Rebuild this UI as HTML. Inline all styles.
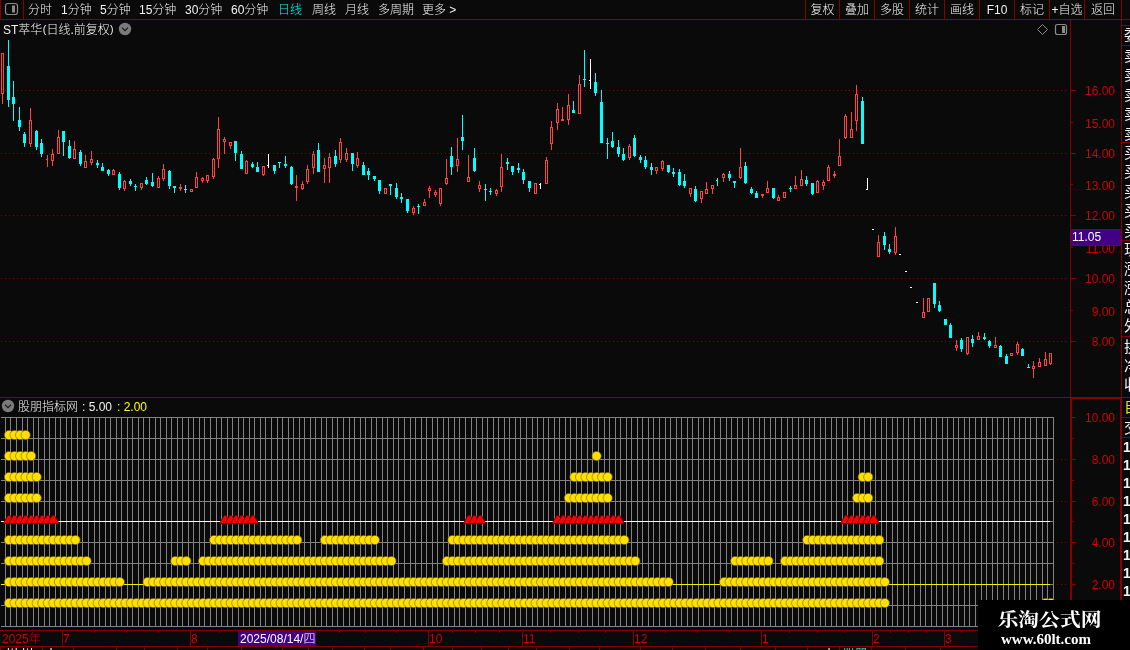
<!DOCTYPE html><html><head><meta charset="utf-8"><title>chart</title><style>
html,body{margin:0;padding:0;background:#0a0a0a;}
body{will-change:transform;width:1130px;height:650px;position:relative;overflow:hidden;font-family:"Liberation Sans","Noto Sans CJK SC",sans-serif;}
.t{position:absolute;white-space:nowrap;font-size:12px;line-height:16px;color:#f2f2f2;font-weight:300;}
.cy{color:#00ffff;}
.pa{font-size:10.5px;position:relative;top:-1.2px;padding:0 0.3px;}
.rd{color:#d20000;line-height:14px;}
.ax{color:#d20000;width:43px;text-align:right;}
.pbox{position:absolute;left:1071px;top:229px;width:50px;height:17px;background:#420086;box-sizing:border-box;border-top:1px solid #870000;border-bottom:1px solid #870000;}
.pbox span{position:absolute;left:1px;top:0px;font-size:12px;line-height:15px;color:#fff;}
.dbox{position:absolute;left:238px;top:631px;width:78px;height:15px;background:#420086;color:#fff;font-size:12px;line-height:17px;font-weight:300;text-indent:2px;white-space:nowrap;overflow:hidden;}
.strip{position:absolute;left:1122px;top:0;width:8px;height:650px;overflow:hidden;}
.s{position:absolute;left:2px;font-size:15px;line-height:18px;color:#f2f2f2;white-space:nowrap;}
.wm{position:absolute;left:978px;top:600px;width:152px;height:50px;background:#000;color:#fff;font-family:"Liberation Serif","Noto Serif CJK SC",serif;font-weight:bold;}
.w1{position:absolute;left:19.5px;top:8px;font-size:20.8px;line-height:26px;white-space:nowrap;transform:scaleY(0.9);transform-origin:0 0;}
.w2{position:absolute;left:23px;top:30px;font-size:15px;line-height:18px;white-space:nowrap;}
.bt{position:absolute;top:648px;height:2px;overflow:hidden;font-size:12px;line-height:12px;white-space:nowrap;}
.bt span{position:relative;top:0px;display:block;}
</style></head><body><svg width="1130" height="650" viewBox="0 0 1130 650" style="position:absolute;left:0;top:0"><g shape-rendering="crispEdges"><path d="M1 90h1v1h-1zM5 90h1v1h-1zM9 90h1v1h-1zM13 90h1v1h-1zM17 90h1v1h-1zM21 90h1v1h-1zM25 90h1v1h-1zM29 90h1v1h-1zM33 90h1v1h-1zM37 90h1v1h-1zM41 90h1v1h-1zM45 90h1v1h-1zM49 90h1v1h-1zM53 90h1v1h-1zM57 90h1v1h-1zM61 90h1v1h-1zM65 90h1v1h-1zM69 90h1v1h-1zM73 90h1v1h-1zM77 90h1v1h-1zM81 90h1v1h-1zM85 90h1v1h-1zM89 90h1v1h-1zM93 90h1v1h-1zM97 90h1v1h-1zM101 90h1v1h-1zM105 90h1v1h-1zM109 90h1v1h-1zM113 90h1v1h-1zM117 90h1v1h-1zM121 90h1v1h-1zM125 90h1v1h-1zM129 90h1v1h-1zM133 90h1v1h-1zM137 90h1v1h-1zM141 90h1v1h-1zM145 90h1v1h-1zM149 90h1v1h-1zM153 90h1v1h-1zM157 90h1v1h-1zM161 90h1v1h-1zM165 90h1v1h-1zM169 90h1v1h-1zM173 90h1v1h-1zM177 90h1v1h-1zM181 90h1v1h-1zM185 90h1v1h-1zM189 90h1v1h-1zM193 90h1v1h-1zM197 90h1v1h-1zM201 90h1v1h-1zM205 90h1v1h-1zM209 90h1v1h-1zM213 90h1v1h-1zM217 90h1v1h-1zM221 90h1v1h-1zM225 90h1v1h-1zM229 90h1v1h-1zM233 90h1v1h-1zM237 90h1v1h-1zM241 90h1v1h-1zM245 90h1v1h-1zM249 90h1v1h-1zM253 90h1v1h-1zM257 90h1v1h-1zM261 90h1v1h-1zM265 90h1v1h-1zM269 90h1v1h-1zM273 90h1v1h-1zM277 90h1v1h-1zM281 90h1v1h-1zM285 90h1v1h-1zM289 90h1v1h-1zM293 90h1v1h-1zM297 90h1v1h-1zM301 90h1v1h-1zM305 90h1v1h-1zM309 90h1v1h-1zM313 90h1v1h-1zM317 90h1v1h-1zM321 90h1v1h-1zM325 90h1v1h-1zM329 90h1v1h-1zM333 90h1v1h-1zM337 90h1v1h-1zM341 90h1v1h-1zM345 90h1v1h-1zM349 90h1v1h-1zM353 90h1v1h-1zM357 90h1v1h-1zM361 90h1v1h-1zM365 90h1v1h-1zM369 90h1v1h-1zM373 90h1v1h-1zM377 90h1v1h-1zM381 90h1v1h-1zM385 90h1v1h-1zM389 90h1v1h-1zM393 90h1v1h-1zM397 90h1v1h-1zM401 90h1v1h-1zM405 90h1v1h-1zM409 90h1v1h-1zM413 90h1v1h-1zM417 90h1v1h-1zM421 90h1v1h-1zM425 90h1v1h-1zM429 90h1v1h-1zM433 90h1v1h-1zM437 90h1v1h-1zM441 90h1v1h-1zM445 90h1v1h-1zM449 90h1v1h-1zM453 90h1v1h-1zM457 90h1v1h-1zM461 90h1v1h-1zM465 90h1v1h-1zM469 90h1v1h-1zM473 90h1v1h-1zM477 90h1v1h-1zM481 90h1v1h-1zM485 90h1v1h-1zM489 90h1v1h-1zM493 90h1v1h-1zM497 90h1v1h-1zM501 90h1v1h-1zM505 90h1v1h-1zM509 90h1v1h-1zM513 90h1v1h-1zM517 90h1v1h-1zM521 90h1v1h-1zM525 90h1v1h-1zM529 90h1v1h-1zM533 90h1v1h-1zM537 90h1v1h-1zM541 90h1v1h-1zM545 90h1v1h-1zM549 90h1v1h-1zM553 90h1v1h-1zM557 90h1v1h-1zM561 90h1v1h-1zM565 90h1v1h-1zM569 90h1v1h-1zM573 90h1v1h-1zM577 90h1v1h-1zM581 90h1v1h-1zM585 90h1v1h-1zM589 90h1v1h-1zM593 90h1v1h-1zM597 90h1v1h-1zM601 90h1v1h-1zM605 90h1v1h-1zM609 90h1v1h-1zM613 90h1v1h-1zM617 90h1v1h-1zM621 90h1v1h-1zM625 90h1v1h-1zM629 90h1v1h-1zM633 90h1v1h-1zM637 90h1v1h-1zM641 90h1v1h-1zM645 90h1v1h-1zM649 90h1v1h-1zM653 90h1v1h-1zM657 90h1v1h-1zM661 90h1v1h-1zM665 90h1v1h-1zM669 90h1v1h-1zM673 90h1v1h-1zM677 90h1v1h-1zM681 90h1v1h-1zM685 90h1v1h-1zM689 90h1v1h-1zM693 90h1v1h-1zM697 90h1v1h-1zM701 90h1v1h-1zM705 90h1v1h-1zM709 90h1v1h-1zM713 90h1v1h-1zM717 90h1v1h-1zM721 90h1v1h-1zM725 90h1v1h-1zM729 90h1v1h-1zM733 90h1v1h-1zM737 90h1v1h-1zM741 90h1v1h-1zM745 90h1v1h-1zM749 90h1v1h-1zM753 90h1v1h-1zM757 90h1v1h-1zM761 90h1v1h-1zM765 90h1v1h-1zM769 90h1v1h-1zM773 90h1v1h-1zM777 90h1v1h-1zM781 90h1v1h-1zM785 90h1v1h-1zM789 90h1v1h-1zM793 90h1v1h-1zM797 90h1v1h-1zM801 90h1v1h-1zM805 90h1v1h-1zM809 90h1v1h-1zM813 90h1v1h-1zM817 90h1v1h-1zM821 90h1v1h-1zM825 90h1v1h-1zM829 90h1v1h-1zM833 90h1v1h-1zM837 90h1v1h-1zM841 90h1v1h-1zM845 90h1v1h-1zM849 90h1v1h-1zM853 90h1v1h-1zM857 90h1v1h-1zM861 90h1v1h-1zM865 90h1v1h-1zM869 90h1v1h-1zM873 90h1v1h-1zM877 90h1v1h-1zM881 90h1v1h-1zM885 90h1v1h-1zM889 90h1v1h-1zM893 90h1v1h-1zM897 90h1v1h-1zM901 90h1v1h-1zM905 90h1v1h-1zM909 90h1v1h-1zM913 90h1v1h-1zM917 90h1v1h-1zM921 90h1v1h-1zM925 90h1v1h-1zM929 90h1v1h-1zM933 90h1v1h-1zM937 90h1v1h-1zM941 90h1v1h-1zM945 90h1v1h-1zM949 90h1v1h-1zM953 90h1v1h-1zM957 90h1v1h-1zM961 90h1v1h-1zM965 90h1v1h-1zM969 90h1v1h-1zM973 90h1v1h-1zM977 90h1v1h-1zM981 90h1v1h-1zM985 90h1v1h-1zM989 90h1v1h-1zM993 90h1v1h-1zM997 90h1v1h-1zM1001 90h1v1h-1zM1005 90h1v1h-1zM1009 90h1v1h-1zM1013 90h1v1h-1zM1017 90h1v1h-1zM1021 90h1v1h-1zM1025 90h1v1h-1zM1029 90h1v1h-1zM1033 90h1v1h-1zM1037 90h1v1h-1zM1041 90h1v1h-1zM1045 90h1v1h-1zM1049 90h1v1h-1zM1053 90h1v1h-1zM1057 90h1v1h-1zM1061 90h1v1h-1zM1065 90h1v1h-1zM1 153h1v1h-1zM5 153h1v1h-1zM9 153h1v1h-1zM13 153h1v1h-1zM17 153h1v1h-1zM21 153h1v1h-1zM25 153h1v1h-1zM29 153h1v1h-1zM33 153h1v1h-1zM37 153h1v1h-1zM41 153h1v1h-1zM45 153h1v1h-1zM49 153h1v1h-1zM53 153h1v1h-1zM57 153h1v1h-1zM61 153h1v1h-1zM65 153h1v1h-1zM69 153h1v1h-1zM73 153h1v1h-1zM77 153h1v1h-1zM81 153h1v1h-1zM85 153h1v1h-1zM89 153h1v1h-1zM93 153h1v1h-1zM97 153h1v1h-1zM101 153h1v1h-1zM105 153h1v1h-1zM109 153h1v1h-1zM113 153h1v1h-1zM117 153h1v1h-1zM121 153h1v1h-1zM125 153h1v1h-1zM129 153h1v1h-1zM133 153h1v1h-1zM137 153h1v1h-1zM141 153h1v1h-1zM145 153h1v1h-1zM149 153h1v1h-1zM153 153h1v1h-1zM157 153h1v1h-1zM161 153h1v1h-1zM165 153h1v1h-1zM169 153h1v1h-1zM173 153h1v1h-1zM177 153h1v1h-1zM181 153h1v1h-1zM185 153h1v1h-1zM189 153h1v1h-1zM193 153h1v1h-1zM197 153h1v1h-1zM201 153h1v1h-1zM205 153h1v1h-1zM209 153h1v1h-1zM213 153h1v1h-1zM217 153h1v1h-1zM221 153h1v1h-1zM225 153h1v1h-1zM229 153h1v1h-1zM233 153h1v1h-1zM237 153h1v1h-1zM241 153h1v1h-1zM245 153h1v1h-1zM249 153h1v1h-1zM253 153h1v1h-1zM257 153h1v1h-1zM261 153h1v1h-1zM265 153h1v1h-1zM269 153h1v1h-1zM273 153h1v1h-1zM277 153h1v1h-1zM281 153h1v1h-1zM285 153h1v1h-1zM289 153h1v1h-1zM293 153h1v1h-1zM297 153h1v1h-1zM301 153h1v1h-1zM305 153h1v1h-1zM309 153h1v1h-1zM313 153h1v1h-1zM317 153h1v1h-1zM321 153h1v1h-1zM325 153h1v1h-1zM329 153h1v1h-1zM333 153h1v1h-1zM337 153h1v1h-1zM341 153h1v1h-1zM345 153h1v1h-1zM349 153h1v1h-1zM353 153h1v1h-1zM357 153h1v1h-1zM361 153h1v1h-1zM365 153h1v1h-1zM369 153h1v1h-1zM373 153h1v1h-1zM377 153h1v1h-1zM381 153h1v1h-1zM385 153h1v1h-1zM389 153h1v1h-1zM393 153h1v1h-1zM397 153h1v1h-1zM401 153h1v1h-1zM405 153h1v1h-1zM409 153h1v1h-1zM413 153h1v1h-1zM417 153h1v1h-1zM421 153h1v1h-1zM425 153h1v1h-1zM429 153h1v1h-1zM433 153h1v1h-1zM437 153h1v1h-1zM441 153h1v1h-1zM445 153h1v1h-1zM449 153h1v1h-1zM453 153h1v1h-1zM457 153h1v1h-1zM461 153h1v1h-1zM465 153h1v1h-1zM469 153h1v1h-1zM473 153h1v1h-1zM477 153h1v1h-1zM481 153h1v1h-1zM485 153h1v1h-1zM489 153h1v1h-1zM493 153h1v1h-1zM497 153h1v1h-1zM501 153h1v1h-1zM505 153h1v1h-1zM509 153h1v1h-1zM513 153h1v1h-1zM517 153h1v1h-1zM521 153h1v1h-1zM525 153h1v1h-1zM529 153h1v1h-1zM533 153h1v1h-1zM537 153h1v1h-1zM541 153h1v1h-1zM545 153h1v1h-1zM549 153h1v1h-1zM553 153h1v1h-1zM557 153h1v1h-1zM561 153h1v1h-1zM565 153h1v1h-1zM569 153h1v1h-1zM573 153h1v1h-1zM577 153h1v1h-1zM581 153h1v1h-1zM585 153h1v1h-1zM589 153h1v1h-1zM593 153h1v1h-1zM597 153h1v1h-1zM601 153h1v1h-1zM605 153h1v1h-1zM609 153h1v1h-1zM613 153h1v1h-1zM617 153h1v1h-1zM621 153h1v1h-1zM625 153h1v1h-1zM629 153h1v1h-1zM633 153h1v1h-1zM637 153h1v1h-1zM641 153h1v1h-1zM645 153h1v1h-1zM649 153h1v1h-1zM653 153h1v1h-1zM657 153h1v1h-1zM661 153h1v1h-1zM665 153h1v1h-1zM669 153h1v1h-1zM673 153h1v1h-1zM677 153h1v1h-1zM681 153h1v1h-1zM685 153h1v1h-1zM689 153h1v1h-1zM693 153h1v1h-1zM697 153h1v1h-1zM701 153h1v1h-1zM705 153h1v1h-1zM709 153h1v1h-1zM713 153h1v1h-1zM717 153h1v1h-1zM721 153h1v1h-1zM725 153h1v1h-1zM729 153h1v1h-1zM733 153h1v1h-1zM737 153h1v1h-1zM741 153h1v1h-1zM745 153h1v1h-1zM749 153h1v1h-1zM753 153h1v1h-1zM757 153h1v1h-1zM761 153h1v1h-1zM765 153h1v1h-1zM769 153h1v1h-1zM773 153h1v1h-1zM777 153h1v1h-1zM781 153h1v1h-1zM785 153h1v1h-1zM789 153h1v1h-1zM793 153h1v1h-1zM797 153h1v1h-1zM801 153h1v1h-1zM805 153h1v1h-1zM809 153h1v1h-1zM813 153h1v1h-1zM817 153h1v1h-1zM821 153h1v1h-1zM825 153h1v1h-1zM829 153h1v1h-1zM833 153h1v1h-1zM837 153h1v1h-1zM841 153h1v1h-1zM845 153h1v1h-1zM849 153h1v1h-1zM853 153h1v1h-1zM857 153h1v1h-1zM861 153h1v1h-1zM865 153h1v1h-1zM869 153h1v1h-1zM873 153h1v1h-1zM877 153h1v1h-1zM881 153h1v1h-1zM885 153h1v1h-1zM889 153h1v1h-1zM893 153h1v1h-1zM897 153h1v1h-1zM901 153h1v1h-1zM905 153h1v1h-1zM909 153h1v1h-1zM913 153h1v1h-1zM917 153h1v1h-1zM921 153h1v1h-1zM925 153h1v1h-1zM929 153h1v1h-1zM933 153h1v1h-1zM937 153h1v1h-1zM941 153h1v1h-1zM945 153h1v1h-1zM949 153h1v1h-1zM953 153h1v1h-1zM957 153h1v1h-1zM961 153h1v1h-1zM965 153h1v1h-1zM969 153h1v1h-1zM973 153h1v1h-1zM977 153h1v1h-1zM981 153h1v1h-1zM985 153h1v1h-1zM989 153h1v1h-1zM993 153h1v1h-1zM997 153h1v1h-1zM1001 153h1v1h-1zM1005 153h1v1h-1zM1009 153h1v1h-1zM1013 153h1v1h-1zM1017 153h1v1h-1zM1021 153h1v1h-1zM1025 153h1v1h-1zM1029 153h1v1h-1zM1033 153h1v1h-1zM1037 153h1v1h-1zM1041 153h1v1h-1zM1045 153h1v1h-1zM1049 153h1v1h-1zM1053 153h1v1h-1zM1057 153h1v1h-1zM1061 153h1v1h-1zM1065 153h1v1h-1zM1 215h1v1h-1zM5 215h1v1h-1zM9 215h1v1h-1zM13 215h1v1h-1zM17 215h1v1h-1zM21 215h1v1h-1zM25 215h1v1h-1zM29 215h1v1h-1zM33 215h1v1h-1zM37 215h1v1h-1zM41 215h1v1h-1zM45 215h1v1h-1zM49 215h1v1h-1zM53 215h1v1h-1zM57 215h1v1h-1zM61 215h1v1h-1zM65 215h1v1h-1zM69 215h1v1h-1zM73 215h1v1h-1zM77 215h1v1h-1zM81 215h1v1h-1zM85 215h1v1h-1zM89 215h1v1h-1zM93 215h1v1h-1zM97 215h1v1h-1zM101 215h1v1h-1zM105 215h1v1h-1zM109 215h1v1h-1zM113 215h1v1h-1zM117 215h1v1h-1zM121 215h1v1h-1zM125 215h1v1h-1zM129 215h1v1h-1zM133 215h1v1h-1zM137 215h1v1h-1zM141 215h1v1h-1zM145 215h1v1h-1zM149 215h1v1h-1zM153 215h1v1h-1zM157 215h1v1h-1zM161 215h1v1h-1zM165 215h1v1h-1zM169 215h1v1h-1zM173 215h1v1h-1zM177 215h1v1h-1zM181 215h1v1h-1zM185 215h1v1h-1zM189 215h1v1h-1zM193 215h1v1h-1zM197 215h1v1h-1zM201 215h1v1h-1zM205 215h1v1h-1zM209 215h1v1h-1zM213 215h1v1h-1zM217 215h1v1h-1zM221 215h1v1h-1zM225 215h1v1h-1zM229 215h1v1h-1zM233 215h1v1h-1zM237 215h1v1h-1zM241 215h1v1h-1zM245 215h1v1h-1zM249 215h1v1h-1zM253 215h1v1h-1zM257 215h1v1h-1zM261 215h1v1h-1zM265 215h1v1h-1zM269 215h1v1h-1zM273 215h1v1h-1zM277 215h1v1h-1zM281 215h1v1h-1zM285 215h1v1h-1zM289 215h1v1h-1zM293 215h1v1h-1zM297 215h1v1h-1zM301 215h1v1h-1zM305 215h1v1h-1zM309 215h1v1h-1zM313 215h1v1h-1zM317 215h1v1h-1zM321 215h1v1h-1zM325 215h1v1h-1zM329 215h1v1h-1zM333 215h1v1h-1zM337 215h1v1h-1zM341 215h1v1h-1zM345 215h1v1h-1zM349 215h1v1h-1zM353 215h1v1h-1zM357 215h1v1h-1zM361 215h1v1h-1zM365 215h1v1h-1zM369 215h1v1h-1zM373 215h1v1h-1zM377 215h1v1h-1zM381 215h1v1h-1zM385 215h1v1h-1zM389 215h1v1h-1zM393 215h1v1h-1zM397 215h1v1h-1zM401 215h1v1h-1zM405 215h1v1h-1zM409 215h1v1h-1zM413 215h1v1h-1zM417 215h1v1h-1zM421 215h1v1h-1zM425 215h1v1h-1zM429 215h1v1h-1zM433 215h1v1h-1zM437 215h1v1h-1zM441 215h1v1h-1zM445 215h1v1h-1zM449 215h1v1h-1zM453 215h1v1h-1zM457 215h1v1h-1zM461 215h1v1h-1zM465 215h1v1h-1zM469 215h1v1h-1zM473 215h1v1h-1zM477 215h1v1h-1zM481 215h1v1h-1zM485 215h1v1h-1zM489 215h1v1h-1zM493 215h1v1h-1zM497 215h1v1h-1zM501 215h1v1h-1zM505 215h1v1h-1zM509 215h1v1h-1zM513 215h1v1h-1zM517 215h1v1h-1zM521 215h1v1h-1zM525 215h1v1h-1zM529 215h1v1h-1zM533 215h1v1h-1zM537 215h1v1h-1zM541 215h1v1h-1zM545 215h1v1h-1zM549 215h1v1h-1zM553 215h1v1h-1zM557 215h1v1h-1zM561 215h1v1h-1zM565 215h1v1h-1zM569 215h1v1h-1zM573 215h1v1h-1zM577 215h1v1h-1zM581 215h1v1h-1zM585 215h1v1h-1zM589 215h1v1h-1zM593 215h1v1h-1zM597 215h1v1h-1zM601 215h1v1h-1zM605 215h1v1h-1zM609 215h1v1h-1zM613 215h1v1h-1zM617 215h1v1h-1zM621 215h1v1h-1zM625 215h1v1h-1zM629 215h1v1h-1zM633 215h1v1h-1zM637 215h1v1h-1zM641 215h1v1h-1zM645 215h1v1h-1zM649 215h1v1h-1zM653 215h1v1h-1zM657 215h1v1h-1zM661 215h1v1h-1zM665 215h1v1h-1zM669 215h1v1h-1zM673 215h1v1h-1zM677 215h1v1h-1zM681 215h1v1h-1zM685 215h1v1h-1zM689 215h1v1h-1zM693 215h1v1h-1zM697 215h1v1h-1zM701 215h1v1h-1zM705 215h1v1h-1zM709 215h1v1h-1zM713 215h1v1h-1zM717 215h1v1h-1zM721 215h1v1h-1zM725 215h1v1h-1zM729 215h1v1h-1zM733 215h1v1h-1zM737 215h1v1h-1zM741 215h1v1h-1zM745 215h1v1h-1zM749 215h1v1h-1zM753 215h1v1h-1zM757 215h1v1h-1zM761 215h1v1h-1zM765 215h1v1h-1zM769 215h1v1h-1zM773 215h1v1h-1zM777 215h1v1h-1zM781 215h1v1h-1zM785 215h1v1h-1zM789 215h1v1h-1zM793 215h1v1h-1zM797 215h1v1h-1zM801 215h1v1h-1zM805 215h1v1h-1zM809 215h1v1h-1zM813 215h1v1h-1zM817 215h1v1h-1zM821 215h1v1h-1zM825 215h1v1h-1zM829 215h1v1h-1zM833 215h1v1h-1zM837 215h1v1h-1zM841 215h1v1h-1zM845 215h1v1h-1zM849 215h1v1h-1zM853 215h1v1h-1zM857 215h1v1h-1zM861 215h1v1h-1zM865 215h1v1h-1zM869 215h1v1h-1zM873 215h1v1h-1zM877 215h1v1h-1zM881 215h1v1h-1zM885 215h1v1h-1zM889 215h1v1h-1zM893 215h1v1h-1zM897 215h1v1h-1zM901 215h1v1h-1zM905 215h1v1h-1zM909 215h1v1h-1zM913 215h1v1h-1zM917 215h1v1h-1zM921 215h1v1h-1zM925 215h1v1h-1zM929 215h1v1h-1zM933 215h1v1h-1zM937 215h1v1h-1zM941 215h1v1h-1zM945 215h1v1h-1zM949 215h1v1h-1zM953 215h1v1h-1zM957 215h1v1h-1zM961 215h1v1h-1zM965 215h1v1h-1zM969 215h1v1h-1zM973 215h1v1h-1zM977 215h1v1h-1zM981 215h1v1h-1zM985 215h1v1h-1zM989 215h1v1h-1zM993 215h1v1h-1zM997 215h1v1h-1zM1001 215h1v1h-1zM1005 215h1v1h-1zM1009 215h1v1h-1zM1013 215h1v1h-1zM1017 215h1v1h-1zM1021 215h1v1h-1zM1025 215h1v1h-1zM1029 215h1v1h-1zM1033 215h1v1h-1zM1037 215h1v1h-1zM1041 215h1v1h-1zM1045 215h1v1h-1zM1049 215h1v1h-1zM1053 215h1v1h-1zM1057 215h1v1h-1zM1061 215h1v1h-1zM1065 215h1v1h-1zM1 278h1v1h-1zM5 278h1v1h-1zM9 278h1v1h-1zM13 278h1v1h-1zM17 278h1v1h-1zM21 278h1v1h-1zM25 278h1v1h-1zM29 278h1v1h-1zM33 278h1v1h-1zM37 278h1v1h-1zM41 278h1v1h-1zM45 278h1v1h-1zM49 278h1v1h-1zM53 278h1v1h-1zM57 278h1v1h-1zM61 278h1v1h-1zM65 278h1v1h-1zM69 278h1v1h-1zM73 278h1v1h-1zM77 278h1v1h-1zM81 278h1v1h-1zM85 278h1v1h-1zM89 278h1v1h-1zM93 278h1v1h-1zM97 278h1v1h-1zM101 278h1v1h-1zM105 278h1v1h-1zM109 278h1v1h-1zM113 278h1v1h-1zM117 278h1v1h-1zM121 278h1v1h-1zM125 278h1v1h-1zM129 278h1v1h-1zM133 278h1v1h-1zM137 278h1v1h-1zM141 278h1v1h-1zM145 278h1v1h-1zM149 278h1v1h-1zM153 278h1v1h-1zM157 278h1v1h-1zM161 278h1v1h-1zM165 278h1v1h-1zM169 278h1v1h-1zM173 278h1v1h-1zM177 278h1v1h-1zM181 278h1v1h-1zM185 278h1v1h-1zM189 278h1v1h-1zM193 278h1v1h-1zM197 278h1v1h-1zM201 278h1v1h-1zM205 278h1v1h-1zM209 278h1v1h-1zM213 278h1v1h-1zM217 278h1v1h-1zM221 278h1v1h-1zM225 278h1v1h-1zM229 278h1v1h-1zM233 278h1v1h-1zM237 278h1v1h-1zM241 278h1v1h-1zM245 278h1v1h-1zM249 278h1v1h-1zM253 278h1v1h-1zM257 278h1v1h-1zM261 278h1v1h-1zM265 278h1v1h-1zM269 278h1v1h-1zM273 278h1v1h-1zM277 278h1v1h-1zM281 278h1v1h-1zM285 278h1v1h-1zM289 278h1v1h-1zM293 278h1v1h-1zM297 278h1v1h-1zM301 278h1v1h-1zM305 278h1v1h-1zM309 278h1v1h-1zM313 278h1v1h-1zM317 278h1v1h-1zM321 278h1v1h-1zM325 278h1v1h-1zM329 278h1v1h-1zM333 278h1v1h-1zM337 278h1v1h-1zM341 278h1v1h-1zM345 278h1v1h-1zM349 278h1v1h-1zM353 278h1v1h-1zM357 278h1v1h-1zM361 278h1v1h-1zM365 278h1v1h-1zM369 278h1v1h-1zM373 278h1v1h-1zM377 278h1v1h-1zM381 278h1v1h-1zM385 278h1v1h-1zM389 278h1v1h-1zM393 278h1v1h-1zM397 278h1v1h-1zM401 278h1v1h-1zM405 278h1v1h-1zM409 278h1v1h-1zM413 278h1v1h-1zM417 278h1v1h-1zM421 278h1v1h-1zM425 278h1v1h-1zM429 278h1v1h-1zM433 278h1v1h-1zM437 278h1v1h-1zM441 278h1v1h-1zM445 278h1v1h-1zM449 278h1v1h-1zM453 278h1v1h-1zM457 278h1v1h-1zM461 278h1v1h-1zM465 278h1v1h-1zM469 278h1v1h-1zM473 278h1v1h-1zM477 278h1v1h-1zM481 278h1v1h-1zM485 278h1v1h-1zM489 278h1v1h-1zM493 278h1v1h-1zM497 278h1v1h-1zM501 278h1v1h-1zM505 278h1v1h-1zM509 278h1v1h-1zM513 278h1v1h-1zM517 278h1v1h-1zM521 278h1v1h-1zM525 278h1v1h-1zM529 278h1v1h-1zM533 278h1v1h-1zM537 278h1v1h-1zM541 278h1v1h-1zM545 278h1v1h-1zM549 278h1v1h-1zM553 278h1v1h-1zM557 278h1v1h-1zM561 278h1v1h-1zM565 278h1v1h-1zM569 278h1v1h-1zM573 278h1v1h-1zM577 278h1v1h-1zM581 278h1v1h-1zM585 278h1v1h-1zM589 278h1v1h-1zM593 278h1v1h-1zM597 278h1v1h-1zM601 278h1v1h-1zM605 278h1v1h-1zM609 278h1v1h-1zM613 278h1v1h-1zM617 278h1v1h-1zM621 278h1v1h-1zM625 278h1v1h-1zM629 278h1v1h-1zM633 278h1v1h-1zM637 278h1v1h-1zM641 278h1v1h-1zM645 278h1v1h-1zM649 278h1v1h-1zM653 278h1v1h-1zM657 278h1v1h-1zM661 278h1v1h-1zM665 278h1v1h-1zM669 278h1v1h-1zM673 278h1v1h-1zM677 278h1v1h-1zM681 278h1v1h-1zM685 278h1v1h-1zM689 278h1v1h-1zM693 278h1v1h-1zM697 278h1v1h-1zM701 278h1v1h-1zM705 278h1v1h-1zM709 278h1v1h-1zM713 278h1v1h-1zM717 278h1v1h-1zM721 278h1v1h-1zM725 278h1v1h-1zM729 278h1v1h-1zM733 278h1v1h-1zM737 278h1v1h-1zM741 278h1v1h-1zM745 278h1v1h-1zM749 278h1v1h-1zM753 278h1v1h-1zM757 278h1v1h-1zM761 278h1v1h-1zM765 278h1v1h-1zM769 278h1v1h-1zM773 278h1v1h-1zM777 278h1v1h-1zM781 278h1v1h-1zM785 278h1v1h-1zM789 278h1v1h-1zM793 278h1v1h-1zM797 278h1v1h-1zM801 278h1v1h-1zM805 278h1v1h-1zM809 278h1v1h-1zM813 278h1v1h-1zM817 278h1v1h-1zM821 278h1v1h-1zM825 278h1v1h-1zM829 278h1v1h-1zM833 278h1v1h-1zM837 278h1v1h-1zM841 278h1v1h-1zM845 278h1v1h-1zM849 278h1v1h-1zM853 278h1v1h-1zM857 278h1v1h-1zM861 278h1v1h-1zM865 278h1v1h-1zM869 278h1v1h-1zM873 278h1v1h-1zM877 278h1v1h-1zM881 278h1v1h-1zM885 278h1v1h-1zM889 278h1v1h-1zM893 278h1v1h-1zM897 278h1v1h-1zM901 278h1v1h-1zM905 278h1v1h-1zM909 278h1v1h-1zM913 278h1v1h-1zM917 278h1v1h-1zM921 278h1v1h-1zM925 278h1v1h-1zM929 278h1v1h-1zM933 278h1v1h-1zM937 278h1v1h-1zM941 278h1v1h-1zM945 278h1v1h-1zM949 278h1v1h-1zM953 278h1v1h-1zM957 278h1v1h-1zM961 278h1v1h-1zM965 278h1v1h-1zM969 278h1v1h-1zM973 278h1v1h-1zM977 278h1v1h-1zM981 278h1v1h-1zM985 278h1v1h-1zM989 278h1v1h-1zM993 278h1v1h-1zM997 278h1v1h-1zM1001 278h1v1h-1zM1005 278h1v1h-1zM1009 278h1v1h-1zM1013 278h1v1h-1zM1017 278h1v1h-1zM1021 278h1v1h-1zM1025 278h1v1h-1zM1029 278h1v1h-1zM1033 278h1v1h-1zM1037 278h1v1h-1zM1041 278h1v1h-1zM1045 278h1v1h-1zM1049 278h1v1h-1zM1053 278h1v1h-1zM1057 278h1v1h-1zM1061 278h1v1h-1zM1065 278h1v1h-1zM1 341h1v1h-1zM5 341h1v1h-1zM9 341h1v1h-1zM13 341h1v1h-1zM17 341h1v1h-1zM21 341h1v1h-1zM25 341h1v1h-1zM29 341h1v1h-1zM33 341h1v1h-1zM37 341h1v1h-1zM41 341h1v1h-1zM45 341h1v1h-1zM49 341h1v1h-1zM53 341h1v1h-1zM57 341h1v1h-1zM61 341h1v1h-1zM65 341h1v1h-1zM69 341h1v1h-1zM73 341h1v1h-1zM77 341h1v1h-1zM81 341h1v1h-1zM85 341h1v1h-1zM89 341h1v1h-1zM93 341h1v1h-1zM97 341h1v1h-1zM101 341h1v1h-1zM105 341h1v1h-1zM109 341h1v1h-1zM113 341h1v1h-1zM117 341h1v1h-1zM121 341h1v1h-1zM125 341h1v1h-1zM129 341h1v1h-1zM133 341h1v1h-1zM137 341h1v1h-1zM141 341h1v1h-1zM145 341h1v1h-1zM149 341h1v1h-1zM153 341h1v1h-1zM157 341h1v1h-1zM161 341h1v1h-1zM165 341h1v1h-1zM169 341h1v1h-1zM173 341h1v1h-1zM177 341h1v1h-1zM181 341h1v1h-1zM185 341h1v1h-1zM189 341h1v1h-1zM193 341h1v1h-1zM197 341h1v1h-1zM201 341h1v1h-1zM205 341h1v1h-1zM209 341h1v1h-1zM213 341h1v1h-1zM217 341h1v1h-1zM221 341h1v1h-1zM225 341h1v1h-1zM229 341h1v1h-1zM233 341h1v1h-1zM237 341h1v1h-1zM241 341h1v1h-1zM245 341h1v1h-1zM249 341h1v1h-1zM253 341h1v1h-1zM257 341h1v1h-1zM261 341h1v1h-1zM265 341h1v1h-1zM269 341h1v1h-1zM273 341h1v1h-1zM277 341h1v1h-1zM281 341h1v1h-1zM285 341h1v1h-1zM289 341h1v1h-1zM293 341h1v1h-1zM297 341h1v1h-1zM301 341h1v1h-1zM305 341h1v1h-1zM309 341h1v1h-1zM313 341h1v1h-1zM317 341h1v1h-1zM321 341h1v1h-1zM325 341h1v1h-1zM329 341h1v1h-1zM333 341h1v1h-1zM337 341h1v1h-1zM341 341h1v1h-1zM345 341h1v1h-1zM349 341h1v1h-1zM353 341h1v1h-1zM357 341h1v1h-1zM361 341h1v1h-1zM365 341h1v1h-1zM369 341h1v1h-1zM373 341h1v1h-1zM377 341h1v1h-1zM381 341h1v1h-1zM385 341h1v1h-1zM389 341h1v1h-1zM393 341h1v1h-1zM397 341h1v1h-1zM401 341h1v1h-1zM405 341h1v1h-1zM409 341h1v1h-1zM413 341h1v1h-1zM417 341h1v1h-1zM421 341h1v1h-1zM425 341h1v1h-1zM429 341h1v1h-1zM433 341h1v1h-1zM437 341h1v1h-1zM441 341h1v1h-1zM445 341h1v1h-1zM449 341h1v1h-1zM453 341h1v1h-1zM457 341h1v1h-1zM461 341h1v1h-1zM465 341h1v1h-1zM469 341h1v1h-1zM473 341h1v1h-1zM477 341h1v1h-1zM481 341h1v1h-1zM485 341h1v1h-1zM489 341h1v1h-1zM493 341h1v1h-1zM497 341h1v1h-1zM501 341h1v1h-1zM505 341h1v1h-1zM509 341h1v1h-1zM513 341h1v1h-1zM517 341h1v1h-1zM521 341h1v1h-1zM525 341h1v1h-1zM529 341h1v1h-1zM533 341h1v1h-1zM537 341h1v1h-1zM541 341h1v1h-1zM545 341h1v1h-1zM549 341h1v1h-1zM553 341h1v1h-1zM557 341h1v1h-1zM561 341h1v1h-1zM565 341h1v1h-1zM569 341h1v1h-1zM573 341h1v1h-1zM577 341h1v1h-1zM581 341h1v1h-1zM585 341h1v1h-1zM589 341h1v1h-1zM593 341h1v1h-1zM597 341h1v1h-1zM601 341h1v1h-1zM605 341h1v1h-1zM609 341h1v1h-1zM613 341h1v1h-1zM617 341h1v1h-1zM621 341h1v1h-1zM625 341h1v1h-1zM629 341h1v1h-1zM633 341h1v1h-1zM637 341h1v1h-1zM641 341h1v1h-1zM645 341h1v1h-1zM649 341h1v1h-1zM653 341h1v1h-1zM657 341h1v1h-1zM661 341h1v1h-1zM665 341h1v1h-1zM669 341h1v1h-1zM673 341h1v1h-1zM677 341h1v1h-1zM681 341h1v1h-1zM685 341h1v1h-1zM689 341h1v1h-1zM693 341h1v1h-1zM697 341h1v1h-1zM701 341h1v1h-1zM705 341h1v1h-1zM709 341h1v1h-1zM713 341h1v1h-1zM717 341h1v1h-1zM721 341h1v1h-1zM725 341h1v1h-1zM729 341h1v1h-1zM733 341h1v1h-1zM737 341h1v1h-1zM741 341h1v1h-1zM745 341h1v1h-1zM749 341h1v1h-1zM753 341h1v1h-1zM757 341h1v1h-1zM761 341h1v1h-1zM765 341h1v1h-1zM769 341h1v1h-1zM773 341h1v1h-1zM777 341h1v1h-1zM781 341h1v1h-1zM785 341h1v1h-1zM789 341h1v1h-1zM793 341h1v1h-1zM797 341h1v1h-1zM801 341h1v1h-1zM805 341h1v1h-1zM809 341h1v1h-1zM813 341h1v1h-1zM817 341h1v1h-1zM821 341h1v1h-1zM825 341h1v1h-1zM829 341h1v1h-1zM833 341h1v1h-1zM837 341h1v1h-1zM841 341h1v1h-1zM845 341h1v1h-1zM849 341h1v1h-1zM853 341h1v1h-1zM857 341h1v1h-1zM861 341h1v1h-1zM865 341h1v1h-1zM869 341h1v1h-1zM873 341h1v1h-1zM877 341h1v1h-1zM881 341h1v1h-1zM885 341h1v1h-1zM889 341h1v1h-1zM893 341h1v1h-1zM897 341h1v1h-1zM901 341h1v1h-1zM905 341h1v1h-1zM909 341h1v1h-1zM913 341h1v1h-1zM917 341h1v1h-1zM921 341h1v1h-1zM925 341h1v1h-1zM929 341h1v1h-1zM933 341h1v1h-1zM937 341h1v1h-1zM941 341h1v1h-1zM945 341h1v1h-1zM949 341h1v1h-1zM953 341h1v1h-1zM957 341h1v1h-1zM961 341h1v1h-1zM965 341h1v1h-1zM969 341h1v1h-1zM973 341h1v1h-1zM977 341h1v1h-1zM981 341h1v1h-1zM985 341h1v1h-1zM989 341h1v1h-1zM993 341h1v1h-1zM997 341h1v1h-1zM1001 341h1v1h-1zM1005 341h1v1h-1zM1009 341h1v1h-1zM1013 341h1v1h-1zM1017 341h1v1h-1zM1021 341h1v1h-1zM1025 341h1v1h-1zM1029 341h1v1h-1zM1033 341h1v1h-1zM1037 341h1v1h-1zM1041 341h1v1h-1zM1045 341h1v1h-1zM1049 341h1v1h-1zM1053 341h1v1h-1zM1057 341h1v1h-1zM1061 341h1v1h-1zM1065 341h1v1h-1z" fill="#8c0000"/><path d="M1057 459h1v1h-1zM1061 459h1v1h-1zM1065 459h1v1h-1zM1057 501h1v1h-1zM1061 501h1v1h-1zM1065 501h1v1h-1zM1057 542h1v1h-1zM1061 542h1v1h-1zM1065 542h1v1h-1zM1057 584h1v1h-1zM1061 584h1v1h-1zM1065 584h1v1h-1z" fill="#8c0000"/><path d="M2 94h1v10h-1zM1 53h3v1h-3zM1 93h3v1h-3zM1 53h1v41h-1zM3 53h1v41h-1zM30 108h1v12h-1zM30 144h1v3h-1zM29 120h3v1h-3zM29 143h3v1h-3zM29 120h1v24h-1zM31 120h1v24h-1zM47 155h1v12h-1zM46 159h2v1h-2zM52 149h1v5h-1zM52 161h1v5h-1zM51 154h3v1h-3zM51 160h3v1h-3zM51 154h1v7h-1zM53 154h1v7h-1zM58 130h1v7h-1zM57 137h3v1h-3zM57 153h3v1h-3zM57 137h1v17h-1zM59 137h1v17h-1zM74 141h1v8h-1zM73 149h3v1h-3zM73 158h3v1h-3zM73 149h1v10h-1zM75 149h1v10h-1zM85 155h1v6h-1zM84 161h3v1h-3zM84 167h3v1h-3zM84 161h1v7h-1zM86 161h1v7h-1zM91 151h1v8h-1zM91 163h1v2h-1zM90 159h3v1h-3zM90 162h3v1h-3zM90 159h1v4h-1zM92 159h1v4h-1zM113 169h1v1h-1zM112 170h3v1h-3zM112 174h3v1h-3zM112 170h1v5h-1zM114 170h1v5h-1zM124 180h1v1h-1zM124 189h1v2h-1zM123 181h3v1h-3zM123 188h3v1h-3zM123 181h1v8h-1zM125 181h1v8h-1zM141 188h1v2h-1zM140 183h3v1h-3zM140 187h3v1h-3zM140 183h1v5h-1zM142 183h1v5h-1zM158 176h1v2h-1zM157 178h3v1h-3zM157 187h3v1h-3zM157 178h1v10h-1zM159 178h1v10h-1zM163 164h1v5h-1zM163 179h1v2h-1zM162 169h3v1h-3zM162 178h3v1h-3zM162 169h1v10h-1zM164 169h1v10h-1zM180 184h1v7h-1zM179 187h3v2h-3zM190 189h3v1h-3zM190 191h3v1h-3zM190 189h1v3h-1zM192 189h1v3h-1zM196 172h1v5h-1zM195 177h3v1h-3zM195 187h3v1h-3zM195 177h1v11h-1zM197 177h1v11h-1zM202 177h1v1h-1zM202 181h1v2h-1zM201 178h3v1h-3zM201 180h3v1h-3zM201 178h1v3h-1zM203 178h1v3h-1zM207 181h1v2h-1zM206 175h3v1h-3zM206 180h3v1h-3zM206 175h1v6h-1zM208 175h1v6h-1zM213 158h1v1h-1zM213 177h1v2h-1zM212 159h3v1h-3zM212 176h3v1h-3zM212 159h1v18h-1zM214 159h1v18h-1zM218 117h1v12h-1zM218 159h1v9h-1zM217 129h3v1h-3zM217 158h3v1h-3zM217 129h1v30h-1zM219 129h1v30h-1zM224 137h1v2h-1zM224 142h1v12h-1zM223 139h3v1h-3zM223 141h3v1h-3zM223 139h1v3h-1zM225 139h1v3h-1zM230 146h1v3h-1zM229 142h3v1h-3zM229 145h3v1h-3zM229 142h1v4h-1zM231 142h1v4h-1zM246 160h1v1h-1zM245 161h3v1h-3zM245 173h3v1h-3zM245 161h1v13h-1zM247 161h1v13h-1zM263 175h1v1h-1zM262 166h3v1h-3zM262 174h3v1h-3zM262 166h1v9h-1zM264 166h1v9h-1zM296 175h1v26h-1zM295 186h3v2h-3zM302 181h1v3h-1zM302 189h1v1h-1zM301 184h3v1h-3zM301 188h3v1h-3zM301 184h1v5h-1zM303 184h1v5h-1zM307 165h1v4h-1zM307 182h1v2h-1zM306 169h3v1h-3zM306 181h3v1h-3zM306 169h1v13h-1zM308 169h1v13h-1zM313 151h1v3h-1zM313 168h1v6h-1zM312 154h3v1h-3zM312 167h3v1h-3zM312 154h1v14h-1zM314 154h1v14h-1zM324 158h1v7h-1zM324 169h1v14h-1zM323 165h3v1h-3zM323 168h3v1h-3zM323 165h1v4h-1zM325 165h1v4h-1zM329 153h1v4h-1zM329 168h1v15h-1zM328 157h3v1h-3zM328 167h3v1h-3zM328 157h1v11h-1zM330 157h1v11h-1zM340 138h1v4h-1zM340 160h1v3h-1zM339 142h3v1h-3zM339 159h3v1h-3zM339 142h1v18h-1zM341 142h1v18h-1zM346 148h1v5h-1zM346 160h1v2h-1zM345 153h3v1h-3zM345 159h3v1h-3zM345 153h1v7h-1zM347 153h1v7h-1zM357 152h1v6h-1zM357 166h1v2h-1zM356 158h3v1h-3zM356 165h3v1h-3zM356 158h1v8h-1zM358 158h1v8h-1zM384 188h3v1h-3zM384 193h3v1h-3zM384 188h1v6h-1zM386 188h1v6h-1zM413 206h1v2h-1zM413 213h1v2h-1zM412 208h3v1h-3zM412 212h3v1h-3zM412 208h1v5h-1zM414 208h1v5h-1zM424 199h1v3h-1zM423 202h3v1h-3zM423 205h3v1h-3zM423 202h1v4h-1zM425 202h1v4h-1zM429 186h1v2h-1zM429 191h1v7h-1zM428 188h3v1h-3zM428 190h3v1h-3zM428 188h1v3h-1zM430 188h1v3h-1zM435 190h1v2h-1zM435 195h1v2h-1zM434 192h3v1h-3zM434 194h3v1h-3zM434 192h1v3h-1zM436 192h1v3h-1zM440 204h1v2h-1zM439 188h3v1h-3zM439 203h3v1h-3zM439 188h1v16h-1zM441 188h1v16h-1zM446 159h1v19h-1zM446 184h1v1h-1zM445 178h3v1h-3zM445 183h3v1h-3zM445 178h1v6h-1zM447 178h1v6h-1zM457 138h1v21h-1zM457 166h1v6h-1zM456 159h3v1h-3zM456 165h3v1h-3zM456 159h1v7h-1zM458 159h1v7h-1zM468 155h1v22h-1zM467 177h3v1h-3zM467 181h3v1h-3zM467 177h1v5h-1zM469 177h1v5h-1zM479 181h1v4h-1zM479 189h1v3h-1zM478 185h3v1h-3zM478 188h3v1h-3zM478 185h1v4h-1zM480 185h1v4h-1zM496 189h1v1h-1zM496 194h1v2h-1zM495 190h3v1h-3zM495 193h3v1h-3zM495 190h1v4h-1zM497 190h1v4h-1zM501 154h1v13h-1zM501 187h1v5h-1zM500 167h3v1h-3zM500 186h3v1h-3zM500 167h1v20h-1zM502 167h1v20h-1zM534 183h3v1h-3zM534 193h3v1h-3zM534 183h1v11h-1zM536 183h1v11h-1zM546 157h1v3h-1zM545 160h3v1h-3zM545 183h3v1h-3zM545 160h1v24h-1zM547 160h1v24h-1zM551 121h1v6h-1zM551 144h1v6h-1zM550 127h3v1h-3zM550 143h3v1h-3zM550 127h1v17h-1zM552 127h1v17h-1zM557 103h1v6h-1zM557 123h1v7h-1zM556 109h3v1h-3zM556 122h3v1h-3zM556 109h1v14h-1zM558 109h1v14h-1zM562 107h1v14h-1zM561 119h3v2h-3zM568 94h1v11h-1zM568 120h1v5h-1zM567 105h3v1h-3zM567 119h3v1h-3zM567 105h1v15h-1zM569 105h1v15h-1zM579 75h1v9h-1zM578 84h3v1h-3zM578 113h3v1h-3zM578 84h1v30h-1zM580 84h1v30h-1zM629 144h1v2h-1zM629 158h1v2h-1zM628 146h3v1h-3zM628 157h3v1h-3zM628 146h1v12h-1zM630 146h1v12h-1zM656 171h1v3h-1zM655 167h3v1h-3zM655 170h3v1h-3zM655 167h1v4h-1zM657 167h1v4h-1zM662 160h1v1h-1zM662 169h1v2h-1zM661 161h3v1h-3zM661 168h3v1h-3zM661 161h1v8h-1zM663 161h1v8h-1zM690 194h1v3h-1zM689 188h3v1h-3zM689 193h3v1h-3zM689 188h1v6h-1zM691 188h1v6h-1zM701 199h1v4h-1zM700 191h3v1h-3zM700 198h3v1h-3zM700 191h1v8h-1zM702 191h1v8h-1zM706 182h1v7h-1zM705 189h3v1h-3zM705 193h3v1h-3zM705 189h1v5h-1zM707 189h1v5h-1zM712 189h1v5h-1zM711 185h3v1h-3zM711 188h3v1h-3zM711 185h1v4h-1zM713 185h1v4h-1zM723 173h1v1h-1zM723 178h1v4h-1zM722 174h3v1h-3zM722 177h3v1h-3zM722 174h1v4h-1zM724 174h1v4h-1zM740 148h1v19h-1zM740 178h1v1h-1zM739 167h3v1h-3zM739 177h3v1h-3zM739 167h1v11h-1zM741 167h1v11h-1zM762 194h1v4h-1zM761 194h3v2h-3zM767 181h1v7h-1zM766 188h3v1h-3zM766 192h3v1h-3zM766 188h1v5h-1zM768 188h1v5h-1zM778 195h1v2h-1zM777 197h3v1h-3zM777 200h3v1h-3zM777 197h1v4h-1zM779 197h1v4h-1zM783 192h3v1h-3zM783 197h3v1h-3zM783 192h1v6h-1zM785 192h1v6h-1zM795 176h1v9h-1zM794 185h3v1h-3zM794 188h3v1h-3zM794 185h1v4h-1zM796 185h1v4h-1zM801 170h1v9h-1zM800 179h3v1h-3zM800 185h3v1h-3zM800 179h1v7h-1zM802 179h1v7h-1zM817 180h1v1h-1zM816 181h3v1h-3zM816 192h3v1h-3zM816 181h1v12h-1zM818 181h1v12h-1zM823 180h1v2h-1zM823 186h1v4h-1zM822 182h3v1h-3zM822 185h3v1h-3zM822 182h1v4h-1zM824 182h1v4h-1zM828 165h1v2h-1zM827 167h3v1h-3zM827 180h3v1h-3zM827 167h1v14h-1zM829 167h1v14h-1zM834 171h1v7h-1zM833 174h3v2h-3zM839 139h1v17h-1zM838 156h3v1h-3zM838 165h3v1h-3zM838 156h1v10h-1zM840 156h1v10h-1zM845 114h1v2h-1zM845 138h1v1h-1zM844 116h3v1h-3zM844 137h3v1h-3zM844 116h1v22h-1zM846 116h1v22h-1zM851 112h1v17h-1zM850 129h3v1h-3zM850 137h3v1h-3zM850 129h1v9h-1zM852 129h1v9h-1zM856 85h1v9h-1zM856 121h1v10h-1zM855 94h3v1h-3zM855 120h3v1h-3zM855 94h1v27h-1zM857 94h1v27h-1zM878 235h1v7h-1zM877 242h3v1h-3zM877 256h3v1h-3zM877 242h1v15h-1zM879 242h1v15h-1zM895 227h1v9h-1zM895 253h1v2h-1zM894 236h3v1h-3zM894 252h3v1h-3zM894 236h1v17h-1zM896 236h1v17h-1zM923 298h1v14h-1zM922 312h3v1h-3zM922 317h3v1h-3zM922 312h1v6h-1zM924 312h1v6h-1zM927 298h3v1h-3zM927 311h3v1h-3zM927 298h1v14h-1zM929 298h1v14h-1zM956 340h1v5h-1zM956 348h1v3h-1zM955 345h3v1h-3zM955 347h3v1h-3zM955 345h1v3h-1zM957 345h1v3h-1zM967 354h1v1h-1zM966 337h3v1h-3zM966 353h3v1h-3zM966 337h1v17h-1zM968 337h1v17h-1zM978 332h1v4h-1zM977 336h3v1h-3zM977 339h3v1h-3zM977 336h1v4h-1zM979 336h1v4h-1zM995 337h1v8h-1zM994 345h3v1h-3zM994 347h3v1h-3zM994 345h1v3h-1zM996 345h1v3h-1zM1010 353h3v1h-3zM1010 355h3v1h-3zM1010 353h1v3h-1zM1012 353h1v3h-1zM1017 342h1v2h-1zM1017 353h1v2h-1zM1016 344h3v1h-3zM1016 352h3v1h-3zM1016 344h1v9h-1zM1018 344h1v9h-1zM1033 361h1v5h-1zM1033 369h1v9h-1zM1032 366h3v1h-3zM1032 368h3v1h-3zM1032 366h1v3h-1zM1034 366h1v3h-1zM1039 358h1v4h-1zM1038 362h3v1h-3zM1038 366h3v1h-3zM1038 362h1v5h-1zM1040 362h1v5h-1zM1045 352h1v7h-1zM1044 359h3v1h-3zM1044 365h3v1h-3zM1044 359h1v7h-1zM1046 359h1v7h-1zM1050 364h1v1h-1zM1049 353h3v1h-3zM1049 363h3v1h-3zM1049 353h1v11h-1zM1051 353h1v11h-1z" fill="#ff4242"/><path d="M8 40h1v67h-1zM7 66h3v34h-3zM13 81h1v40h-1zM12 97h3v7h-3zM19 107h1v24h-1zM18 120h3v7h-3zM24 132h1v15h-1zM23 134h3v9h-3zM36 130h1v20h-1zM35 131h3v16h-3zM41 139h1v18h-1zM40 143h3v11h-3zM63 131h1v25h-1zM62 131h3v11h-3zM69 140h1v19h-1zM68 146h3v12h-3zM80 150h1v16h-1zM79 152h3v12h-3zM97 160h1v8h-1zM96 163h3v2h-3zM102 163h1v8h-1zM101 167h3v4h-3zM108 169h1v7h-1zM107 170h3v4h-3zM119 172h1v18h-1zM118 174h3v14h-3zM130 179h1v7h-1zM129 181h3v3h-3zM135 184h1v7h-1zM134 186h3v1h-3zM146 177h1v8h-1zM145 180h3v4h-3zM152 173h1v14h-1zM151 182h3v4h-3zM169 170h1v19h-1zM168 171h3v15h-3zM174 186h1v7h-1zM173 186h3v2h-3zM185 185h1v8h-1zM184 189h3v1h-3zM235 141h1v20h-1zM234 141h3v12h-3zM241 151h1v18h-1zM240 154h3v15h-3zM252 162h1v6h-1zM251 164h3v3h-3zM257 162h1v10h-1zM256 167h3v5h-3zM274 165h1v9h-1zM273 165h3v6h-3zM279 162h1v6h-1zM278 162h3v1h-3zM285 156h1v12h-1zM284 164h3v2h-3zM291 166h1v19h-1zM290 167h3v17h-3zM318 143h1v29h-1zM317 150h3v22h-3zM335 150h1v17h-1zM334 156h3v8h-3zM352 153h1v18h-1zM351 153h3v11h-3zM363 162h1v13h-1zM362 165h3v10h-3zM368 168h1v12h-1zM367 171h3v4h-3zM374 176h1v5h-1zM373 176h3v3h-3zM379 180h1v14h-1zM378 180h3v11h-3zM390 184h1v11h-1zM389 184h3v2h-3zM396 183h1v16h-1zM395 188h3v9h-3zM401 193h1v10h-1zM400 197h3v2h-3zM407 199h1v14h-1zM406 199h3v12h-3zM418 204h1v10h-1zM417 206h3v1h-3zM451 147h1v28h-1zM450 156h3v11h-3zM462 115h1v35h-1zM461 137h3v4h-3zM474 148h1v24h-1zM473 158h3v13h-3zM485 184h1v17h-1zM484 189h3v1h-3zM490 188h1v7h-1zM489 191h3v1h-3zM507 158h1v12h-1zM506 162h3v2h-3zM512 166h1v9h-1zM511 166h3v6h-3zM518 163h1v10h-1zM517 168h3v2h-3zM523 169h1v15h-1zM522 172h3v8h-3zM529 181h1v11h-1zM528 181h3v7h-3zM573 101h1v12h-1zM572 110h3v3h-3zM584 50h1v37h-1zM583 79h3v1h-3zM595 73h1v23h-1zM594 82h3v11h-3zM601 90h1v53h-1zM600 102h3v41h-3zM607 138h1v21h-1zM606 143h3v1h-3zM612 132h1v16h-1zM611 141h3v6h-3zM618 140h1v17h-1zM617 147h3v7h-3zM623 148h1v13h-1zM622 154h3v6h-3zM634 135h1v22h-1zM633 138h3v18h-3zM640 155h1v8h-1zM639 157h3v3h-3zM645 156h1v13h-1zM644 160h3v7h-3zM651 163h1v12h-1zM650 167h3v3h-3zM668 165h1v8h-1zM667 165h3v7h-3zM673 168h1v9h-1zM672 172h3v2h-3zM679 169h1v17h-1zM678 172h3v13h-3zM684 174h1v14h-1zM683 181h3v5h-3zM695 186h1v16h-1zM694 189h3v12h-3zM717 178h1v8h-1zM716 180h2v1h-2zM729 171h1v10h-1zM728 174h3v4h-3zM734 181h1v7h-1zM733 181h3v2h-3zM745 162h1v22h-1zM744 166h3v17h-3zM751 187h1v7h-1zM750 189h3v4h-3zM756 191h1v7h-1zM755 193h3v5h-3zM773 188h1v11h-1zM772 188h3v10h-3zM790 186h1v6h-1zM789 188h3v1h-3zM806 176h1v10h-1zM805 180h3v4h-3zM812 183h1v12h-1zM811 183h3v11h-3zM862 97h1v47h-1zM861 101h3v43h-3zM884 232h1v18h-1zM883 236h3v9h-3zM889 244h1v10h-1zM888 249h3v3h-3zM934 283h1v25h-1zM933 283h3v21h-3zM939 301h1v11h-1zM938 305h3v6h-3zM945 319h1v6h-1zM944 319h3v6h-3zM950 323h1v15h-1zM949 325h3v13h-3zM961 338h1v14h-1zM960 340h3v9h-3zM972 335h1v12h-1zM971 339h3v4h-3zM984 333h1v7h-1zM983 337h3v2h-3zM989 340h1v8h-1zM988 341h3v5h-3zM1000 345h1v12h-1zM999 346h3v11h-3zM1006 354h1v10h-1zM1005 356h3v8h-3zM1022 348h1v8h-1zM1021 349h3v7h-3zM1028 364h1v4h-1zM1027 367h3v1h-3z" fill="#00ffff"/><path d="M268 154h1v14h-1zM267 165h2v1h-2zM540 183h1v6h-1zM539 184h2v1h-2zM590 59h1v30h-1zM589 80h2v1h-2zM867 178h1v12h-1zM866 189h2v1h-2zM872 229h2v1h-2zM899 254h2v1h-2zM905 271h2v1h-2zM910 287h2v1h-2zM916 302h2v1h-2z" fill="#ffffff"/><path d="M5 417h1v210h-1zM10 417h1v210h-1zM16 417h1v210h-1zM22 417h1v210h-1zM27 417h1v210h-1zM33 417h1v210h-1zM38 417h1v210h-1zM44 417h1v210h-1zM49 417h1v210h-1zM55 417h1v210h-1zM60 417h1v210h-1zM66 417h1v210h-1zM71 417h1v210h-1zM77 417h1v210h-1zM82 417h1v210h-1zM88 417h1v210h-1zM94 417h1v210h-1zM99 417h1v210h-1zM105 417h1v210h-1zM110 417h1v210h-1zM116 417h1v210h-1zM121 417h1v210h-1zM127 417h1v210h-1zM132 417h1v210h-1zM138 417h1v210h-1zM143 417h1v210h-1zM149 417h1v210h-1zM155 417h1v210h-1zM160 417h1v210h-1zM166 417h1v210h-1zM171 417h1v210h-1zM177 417h1v210h-1zM182 417h1v210h-1zM188 417h1v210h-1zM193 417h1v210h-1zM199 417h1v210h-1zM204 417h1v210h-1zM210 417h1v210h-1zM216 417h1v210h-1zM221 417h1v210h-1zM227 417h1v210h-1zM232 417h1v210h-1zM238 417h1v210h-1zM243 417h1v210h-1zM249 417h1v210h-1zM254 417h1v210h-1zM260 417h1v210h-1zM265 417h1v210h-1zM271 417h1v210h-1zM277 417h1v210h-1zM282 417h1v210h-1zM288 417h1v210h-1zM293 417h1v210h-1zM299 417h1v210h-1zM304 417h1v210h-1zM310 417h1v210h-1zM315 417h1v210h-1zM321 417h1v210h-1zM326 417h1v210h-1zM332 417h1v210h-1zM337 417h1v210h-1zM343 417h1v210h-1zM349 417h1v210h-1zM354 417h1v210h-1zM360 417h1v210h-1zM365 417h1v210h-1zM371 417h1v210h-1zM376 417h1v210h-1zM382 417h1v210h-1zM387 417h1v210h-1zM393 417h1v210h-1zM398 417h1v210h-1zM404 417h1v210h-1zM410 417h1v210h-1zM415 417h1v210h-1zM421 417h1v210h-1zM426 417h1v210h-1zM432 417h1v210h-1zM437 417h1v210h-1zM443 417h1v210h-1zM448 417h1v210h-1zM454 417h1v210h-1zM459 417h1v210h-1zM465 417h1v210h-1zM471 417h1v210h-1zM476 417h1v210h-1zM482 417h1v210h-1zM487 417h1v210h-1zM493 417h1v210h-1zM498 417h1v210h-1zM504 417h1v210h-1zM509 417h1v210h-1zM515 417h1v210h-1zM520 417h1v210h-1zM526 417h1v210h-1zM532 417h1v210h-1zM537 417h1v210h-1zM543 417h1v210h-1zM548 417h1v210h-1zM554 417h1v210h-1zM559 417h1v210h-1zM565 417h1v210h-1zM570 417h1v210h-1zM576 417h1v210h-1zM581 417h1v210h-1zM587 417h1v210h-1zM592 417h1v210h-1zM598 417h1v210h-1zM604 417h1v210h-1zM609 417h1v210h-1zM615 417h1v210h-1zM620 417h1v210h-1zM626 417h1v210h-1zM631 417h1v210h-1zM637 417h1v210h-1zM642 417h1v210h-1zM648 417h1v210h-1zM653 417h1v210h-1zM659 417h1v210h-1zM665 417h1v210h-1zM670 417h1v210h-1zM676 417h1v210h-1zM681 417h1v210h-1zM687 417h1v210h-1zM692 417h1v210h-1zM698 417h1v210h-1zM703 417h1v210h-1zM709 417h1v210h-1zM714 417h1v210h-1zM720 417h1v210h-1zM726 417h1v210h-1zM731 417h1v210h-1zM737 417h1v210h-1zM742 417h1v210h-1zM748 417h1v210h-1zM753 417h1v210h-1zM759 417h1v210h-1zM764 417h1v210h-1zM770 417h1v210h-1zM775 417h1v210h-1zM781 417h1v210h-1zM787 417h1v210h-1zM792 417h1v210h-1zM798 417h1v210h-1zM803 417h1v210h-1zM809 417h1v210h-1zM814 417h1v210h-1zM820 417h1v210h-1zM825 417h1v210h-1zM831 417h1v210h-1zM836 417h1v210h-1zM842 417h1v210h-1zM847 417h1v210h-1zM853 417h1v210h-1zM859 417h1v210h-1zM864 417h1v210h-1zM870 417h1v210h-1zM875 417h1v210h-1zM881 417h1v210h-1zM886 417h1v210h-1zM892 417h1v210h-1zM897 417h1v210h-1zM903 417h1v210h-1zM908 417h1v210h-1zM914 417h1v210h-1zM920 417h1v210h-1zM925 417h1v210h-1zM931 417h1v210h-1zM936 417h1v210h-1zM942 417h1v210h-1zM947 417h1v210h-1zM953 417h1v210h-1zM958 417h1v210h-1zM964 417h1v210h-1zM969 417h1v210h-1zM975 417h1v210h-1zM981 417h1v210h-1zM986 417h1v210h-1zM992 417h1v210h-1zM997 417h1v210h-1zM1003 417h1v210h-1zM1008 417h1v210h-1zM1014 417h1v210h-1zM1019 417h1v210h-1zM1025 417h1v210h-1zM1030 417h1v210h-1zM1036 417h1v210h-1zM1042 417h1v210h-1zM1047 417h1v210h-1zM1053 417h1v210h-1zM1 417h1053v1h-1053zM1 438h1053v1h-1053zM1 459h1053v1h-1053zM1 480h1053v1h-1053zM1 501h1053v1h-1053zM1 521h1053v1h-1053zM1 542h1053v1h-1053zM1 563h1053v1h-1053zM1 584h1053v1h-1053zM1 605h1053v1h-1053zM1 626h1053v1h-1053z" fill="#828282"/><rect x="1" y="584" width="1049" height="1" fill="#f0f000"/><rect x="1" y="521" width="1049" height="1" fill="#ffffff"/><path d="M0 19h1130v1h-1130zM0 0h1v19h-1zM23 0h1v19h-1zM805 0h1v19h-1zM839 0h1v19h-1zM874 0h1v19h-1zM909 0h1v19h-1zM944 0h1v19h-1zM979 0h1v19h-1zM1014 0h1v19h-1zM1049 0h1v19h-1zM1084 0h1v19h-1zM1121 0h1v650h-1zM1070 20h1v377h-1zM1070 397h2v253h-2zM1120 397h1v253h-1zM0 397h1070v1h-1070zM1070 397h51v2h-51zM1121 397h9v1h-9zM0 630h1070v1h-1070zM0 646h1070v1h-1070zM0 646h1v4h-1zM1071 90h5v1h-5zM1071 122h2v1h-2zM1071 153h5v1h-5zM1071 184h2v1h-2zM1071 215h5v1h-5zM1071 247h2v1h-2zM1071 278h5v1h-5zM1071 310h2v1h-2zM1071 341h5v1h-5zM1072 605h2v1h-2zM1072 584h4v1h-4zM1072 563h2v1h-2zM1072 542h4v1h-4zM1072 521h2v1h-2zM1072 501h4v1h-4zM1072 480h2v1h-2zM1072 459h4v1h-4zM1072 438h2v1h-2zM1072 417h4v1h-4zM62 630h1v17h-1zM190 630h1v17h-1zM307 630h1v17h-1zM428 630h1v17h-1zM522 630h1v17h-1zM633 630h1v17h-1zM761 630h1v17h-1zM872 630h1v17h-1zM944 630h1v17h-1zM94 630h1v3h-1zM126 630h1v3h-1zM158 630h1v3h-1zM219 630h1v3h-1zM250 630h1v3h-1zM339 630h1v3h-1zM365 630h1v3h-1zM396 630h1v3h-1zM452 630h1v3h-1zM475 630h1v3h-1zM499 630h1v3h-1zM550 630h1v3h-1zM578 630h1v3h-1zM605 630h1v3h-1zM665 630h1v3h-1zM697 630h1v3h-1zM729 630h1v3h-1zM789 630h1v3h-1zM817 630h1v3h-1zM844 630h1v3h-1zM890 630h1v3h-1zM908 630h1v3h-1zM926 630h1v3h-1zM961 630h1v3h-1zM42 647h1v3h-1zM73 647h1v3h-1zM116 647h1v3h-1zM144 647h1v3h-1zM177 647h1v3h-1zM207 647h1v3h-1zM241 647h1v3h-1zM282 647h1v3h-1zM308 647h1v3h-1zM332 647h1v3h-1zM364 647h1v3h-1zM390 647h1v3h-1zM423 647h1v3h-1zM452 647h1v3h-1zM481 647h1v3h-1zM508 647h1v3h-1zM536 647h1v3h-1zM569 647h1v3h-1zM599 647h1v3h-1zM640 647h1v3h-1zM672 647h1v3h-1zM705 647h1v3h-1zM740 647h1v3h-1zM775 647h1v3h-1zM807 647h1v3h-1zM839 647h1v3h-1zM871 647h1v3h-1zM905 647h1v3h-1zM940 647h1v3h-1zM1122 25h8v1h-8zM1122 45h8v1h-8zM1122 142h8v1h-8zM1122 240h8v1h-8zM1122 336h8v1h-8zM1122 417h8v1h-8zM1122 437h8v1h-8z" fill="#870000"/></g><g fill="#ffe100" stroke="#7a6000" stroke-width="0.6"><circle cx="9.00" cy="603.0" r="4.6"/><circle cx="14.54" cy="603.0" r="4.6"/><circle cx="20.09" cy="603.0" r="4.6"/><circle cx="25.63" cy="603.0" r="4.6"/><circle cx="31.17" cy="603.0" r="4.6"/><circle cx="36.72" cy="603.0" r="4.6"/><circle cx="42.26" cy="603.0" r="4.6"/><circle cx="47.80" cy="603.0" r="4.6"/><circle cx="53.35" cy="603.0" r="4.6"/><circle cx="58.89" cy="603.0" r="4.6"/><circle cx="64.44" cy="603.0" r="4.6"/><circle cx="69.98" cy="603.0" r="4.6"/><circle cx="75.52" cy="603.0" r="4.6"/><circle cx="81.07" cy="603.0" r="4.6"/><circle cx="86.61" cy="603.0" r="4.6"/><circle cx="92.15" cy="603.0" r="4.6"/><circle cx="97.70" cy="603.0" r="4.6"/><circle cx="103.24" cy="603.0" r="4.6"/><circle cx="108.78" cy="603.0" r="4.6"/><circle cx="114.33" cy="603.0" r="4.6"/><circle cx="119.87" cy="603.0" r="4.6"/><circle cx="125.41" cy="603.0" r="4.6"/><circle cx="130.96" cy="603.0" r="4.6"/><circle cx="136.50" cy="603.0" r="4.6"/><circle cx="142.04" cy="603.0" r="4.6"/><circle cx="147.59" cy="603.0" r="4.6"/><circle cx="153.13" cy="603.0" r="4.6"/><circle cx="158.67" cy="603.0" r="4.6"/><circle cx="164.22" cy="603.0" r="4.6"/><circle cx="169.76" cy="603.0" r="4.6"/><circle cx="175.31" cy="603.0" r="4.6"/><circle cx="180.85" cy="603.0" r="4.6"/><circle cx="186.39" cy="603.0" r="4.6"/><circle cx="191.94" cy="603.0" r="4.6"/><circle cx="197.48" cy="603.0" r="4.6"/><circle cx="203.02" cy="603.0" r="4.6"/><circle cx="208.57" cy="603.0" r="4.6"/><circle cx="214.11" cy="603.0" r="4.6"/><circle cx="219.65" cy="603.0" r="4.6"/><circle cx="225.20" cy="603.0" r="4.6"/><circle cx="230.74" cy="603.0" r="4.6"/><circle cx="236.28" cy="603.0" r="4.6"/><circle cx="241.83" cy="603.0" r="4.6"/><circle cx="247.37" cy="603.0" r="4.6"/><circle cx="252.91" cy="603.0" r="4.6"/><circle cx="258.46" cy="603.0" r="4.6"/><circle cx="264.00" cy="603.0" r="4.6"/><circle cx="269.54" cy="603.0" r="4.6"/><circle cx="275.09" cy="603.0" r="4.6"/><circle cx="280.63" cy="603.0" r="4.6"/><circle cx="286.18" cy="603.0" r="4.6"/><circle cx="291.72" cy="603.0" r="4.6"/><circle cx="297.26" cy="603.0" r="4.6"/><circle cx="302.81" cy="603.0" r="4.6"/><circle cx="308.35" cy="603.0" r="4.6"/><circle cx="313.89" cy="603.0" r="4.6"/><circle cx="319.44" cy="603.0" r="4.6"/><circle cx="324.98" cy="603.0" r="4.6"/><circle cx="330.52" cy="603.0" r="4.6"/><circle cx="336.07" cy="603.0" r="4.6"/><circle cx="341.61" cy="603.0" r="4.6"/><circle cx="347.15" cy="603.0" r="4.6"/><circle cx="352.70" cy="603.0" r="4.6"/><circle cx="358.24" cy="603.0" r="4.6"/><circle cx="363.78" cy="603.0" r="4.6"/><circle cx="369.33" cy="603.0" r="4.6"/><circle cx="374.87" cy="603.0" r="4.6"/><circle cx="380.41" cy="603.0" r="4.6"/><circle cx="385.96" cy="603.0" r="4.6"/><circle cx="391.50" cy="603.0" r="4.6"/><circle cx="397.05" cy="603.0" r="4.6"/><circle cx="402.59" cy="603.0" r="4.6"/><circle cx="408.13" cy="603.0" r="4.6"/><circle cx="413.68" cy="603.0" r="4.6"/><circle cx="419.22" cy="603.0" r="4.6"/><circle cx="424.76" cy="603.0" r="4.6"/><circle cx="430.31" cy="603.0" r="4.6"/><circle cx="435.85" cy="603.0" r="4.6"/><circle cx="441.39" cy="603.0" r="4.6"/><circle cx="446.94" cy="603.0" r="4.6"/><circle cx="452.48" cy="603.0" r="4.6"/><circle cx="458.02" cy="603.0" r="4.6"/><circle cx="463.57" cy="603.0" r="4.6"/><circle cx="469.11" cy="603.0" r="4.6"/><circle cx="474.65" cy="603.0" r="4.6"/><circle cx="480.20" cy="603.0" r="4.6"/><circle cx="485.74" cy="603.0" r="4.6"/><circle cx="491.28" cy="603.0" r="4.6"/><circle cx="496.83" cy="603.0" r="4.6"/><circle cx="502.37" cy="603.0" r="4.6"/><circle cx="507.91" cy="603.0" r="4.6"/><circle cx="513.46" cy="603.0" r="4.6"/><circle cx="519.00" cy="603.0" r="4.6"/><circle cx="524.55" cy="603.0" r="4.6"/><circle cx="530.09" cy="603.0" r="4.6"/><circle cx="535.63" cy="603.0" r="4.6"/><circle cx="541.18" cy="603.0" r="4.6"/><circle cx="546.72" cy="603.0" r="4.6"/><circle cx="552.26" cy="603.0" r="4.6"/><circle cx="557.81" cy="603.0" r="4.6"/><circle cx="563.35" cy="603.0" r="4.6"/><circle cx="568.89" cy="603.0" r="4.6"/><circle cx="574.44" cy="603.0" r="4.6"/><circle cx="579.98" cy="603.0" r="4.6"/><circle cx="585.52" cy="603.0" r="4.6"/><circle cx="591.07" cy="603.0" r="4.6"/><circle cx="596.61" cy="603.0" r="4.6"/><circle cx="602.15" cy="603.0" r="4.6"/><circle cx="607.70" cy="603.0" r="4.6"/><circle cx="613.24" cy="603.0" r="4.6"/><circle cx="618.78" cy="603.0" r="4.6"/><circle cx="624.33" cy="603.0" r="4.6"/><circle cx="629.87" cy="603.0" r="4.6"/><circle cx="635.42" cy="603.0" r="4.6"/><circle cx="640.96" cy="603.0" r="4.6"/><circle cx="646.50" cy="603.0" r="4.6"/><circle cx="652.05" cy="603.0" r="4.6"/><circle cx="657.59" cy="603.0" r="4.6"/><circle cx="663.13" cy="603.0" r="4.6"/><circle cx="668.68" cy="603.0" r="4.6"/><circle cx="674.22" cy="603.0" r="4.6"/><circle cx="679.76" cy="603.0" r="4.6"/><circle cx="685.31" cy="603.0" r="4.6"/><circle cx="690.85" cy="603.0" r="4.6"/><circle cx="696.39" cy="603.0" r="4.6"/><circle cx="701.94" cy="603.0" r="4.6"/><circle cx="707.48" cy="603.0" r="4.6"/><circle cx="713.02" cy="603.0" r="4.6"/><circle cx="718.57" cy="603.0" r="4.6"/><circle cx="724.11" cy="603.0" r="4.6"/><circle cx="729.65" cy="603.0" r="4.6"/><circle cx="735.20" cy="603.0" r="4.6"/><circle cx="740.74" cy="603.0" r="4.6"/><circle cx="746.29" cy="603.0" r="4.6"/><circle cx="751.83" cy="603.0" r="4.6"/><circle cx="757.37" cy="603.0" r="4.6"/><circle cx="762.92" cy="603.0" r="4.6"/><circle cx="768.46" cy="603.0" r="4.6"/><circle cx="774.00" cy="603.0" r="4.6"/><circle cx="779.55" cy="603.0" r="4.6"/><circle cx="785.09" cy="603.0" r="4.6"/><circle cx="790.63" cy="603.0" r="4.6"/><circle cx="796.18" cy="603.0" r="4.6"/><circle cx="801.72" cy="603.0" r="4.6"/><circle cx="807.26" cy="603.0" r="4.6"/><circle cx="812.81" cy="603.0" r="4.6"/><circle cx="818.35" cy="603.0" r="4.6"/><circle cx="823.89" cy="603.0" r="4.6"/><circle cx="829.44" cy="603.0" r="4.6"/><circle cx="834.98" cy="603.0" r="4.6"/><circle cx="840.52" cy="603.0" r="4.6"/><circle cx="846.07" cy="603.0" r="4.6"/><circle cx="851.61" cy="603.0" r="4.6"/><circle cx="857.16" cy="603.0" r="4.6"/><circle cx="862.70" cy="603.0" r="4.6"/><circle cx="868.24" cy="603.0" r="4.6"/><circle cx="873.79" cy="603.0" r="4.6"/><circle cx="879.33" cy="603.0" r="4.6"/><circle cx="884.87" cy="603.0" r="4.6"/><circle cx="9.00" cy="582.0" r="4.6"/><circle cx="14.54" cy="582.0" r="4.6"/><circle cx="20.09" cy="582.0" r="4.6"/><circle cx="25.63" cy="582.0" r="4.6"/><circle cx="31.17" cy="582.0" r="4.6"/><circle cx="36.72" cy="582.0" r="4.6"/><circle cx="42.26" cy="582.0" r="4.6"/><circle cx="47.80" cy="582.0" r="4.6"/><circle cx="53.35" cy="582.0" r="4.6"/><circle cx="58.89" cy="582.0" r="4.6"/><circle cx="64.44" cy="582.0" r="4.6"/><circle cx="69.98" cy="582.0" r="4.6"/><circle cx="75.52" cy="582.0" r="4.6"/><circle cx="81.07" cy="582.0" r="4.6"/><circle cx="86.61" cy="582.0" r="4.6"/><circle cx="92.15" cy="582.0" r="4.6"/><circle cx="97.70" cy="582.0" r="4.6"/><circle cx="103.24" cy="582.0" r="4.6"/><circle cx="108.78" cy="582.0" r="4.6"/><circle cx="114.33" cy="582.0" r="4.6"/><circle cx="119.87" cy="582.0" r="4.6"/><circle cx="147.59" cy="582.0" r="4.6"/><circle cx="153.13" cy="582.0" r="4.6"/><circle cx="158.67" cy="582.0" r="4.6"/><circle cx="164.22" cy="582.0" r="4.6"/><circle cx="169.76" cy="582.0" r="4.6"/><circle cx="175.31" cy="582.0" r="4.6"/><circle cx="180.85" cy="582.0" r="4.6"/><circle cx="186.39" cy="582.0" r="4.6"/><circle cx="191.94" cy="582.0" r="4.6"/><circle cx="197.48" cy="582.0" r="4.6"/><circle cx="203.02" cy="582.0" r="4.6"/><circle cx="208.57" cy="582.0" r="4.6"/><circle cx="214.11" cy="582.0" r="4.6"/><circle cx="219.65" cy="582.0" r="4.6"/><circle cx="225.20" cy="582.0" r="4.6"/><circle cx="230.74" cy="582.0" r="4.6"/><circle cx="236.28" cy="582.0" r="4.6"/><circle cx="241.83" cy="582.0" r="4.6"/><circle cx="247.37" cy="582.0" r="4.6"/><circle cx="252.91" cy="582.0" r="4.6"/><circle cx="258.46" cy="582.0" r="4.6"/><circle cx="264.00" cy="582.0" r="4.6"/><circle cx="269.54" cy="582.0" r="4.6"/><circle cx="275.09" cy="582.0" r="4.6"/><circle cx="280.63" cy="582.0" r="4.6"/><circle cx="286.18" cy="582.0" r="4.6"/><circle cx="291.72" cy="582.0" r="4.6"/><circle cx="297.26" cy="582.0" r="4.6"/><circle cx="302.81" cy="582.0" r="4.6"/><circle cx="308.35" cy="582.0" r="4.6"/><circle cx="313.89" cy="582.0" r="4.6"/><circle cx="319.44" cy="582.0" r="4.6"/><circle cx="324.98" cy="582.0" r="4.6"/><circle cx="330.52" cy="582.0" r="4.6"/><circle cx="336.07" cy="582.0" r="4.6"/><circle cx="341.61" cy="582.0" r="4.6"/><circle cx="347.15" cy="582.0" r="4.6"/><circle cx="352.70" cy="582.0" r="4.6"/><circle cx="358.24" cy="582.0" r="4.6"/><circle cx="363.78" cy="582.0" r="4.6"/><circle cx="369.33" cy="582.0" r="4.6"/><circle cx="374.87" cy="582.0" r="4.6"/><circle cx="380.41" cy="582.0" r="4.6"/><circle cx="385.96" cy="582.0" r="4.6"/><circle cx="391.50" cy="582.0" r="4.6"/><circle cx="397.05" cy="582.0" r="4.6"/><circle cx="402.59" cy="582.0" r="4.6"/><circle cx="408.13" cy="582.0" r="4.6"/><circle cx="413.68" cy="582.0" r="4.6"/><circle cx="419.22" cy="582.0" r="4.6"/><circle cx="424.76" cy="582.0" r="4.6"/><circle cx="430.31" cy="582.0" r="4.6"/><circle cx="435.85" cy="582.0" r="4.6"/><circle cx="441.39" cy="582.0" r="4.6"/><circle cx="446.94" cy="582.0" r="4.6"/><circle cx="452.48" cy="582.0" r="4.6"/><circle cx="458.02" cy="582.0" r="4.6"/><circle cx="463.57" cy="582.0" r="4.6"/><circle cx="469.11" cy="582.0" r="4.6"/><circle cx="474.65" cy="582.0" r="4.6"/><circle cx="480.20" cy="582.0" r="4.6"/><circle cx="485.74" cy="582.0" r="4.6"/><circle cx="491.28" cy="582.0" r="4.6"/><circle cx="496.83" cy="582.0" r="4.6"/><circle cx="502.37" cy="582.0" r="4.6"/><circle cx="507.91" cy="582.0" r="4.6"/><circle cx="513.46" cy="582.0" r="4.6"/><circle cx="519.00" cy="582.0" r="4.6"/><circle cx="524.55" cy="582.0" r="4.6"/><circle cx="530.09" cy="582.0" r="4.6"/><circle cx="535.63" cy="582.0" r="4.6"/><circle cx="541.18" cy="582.0" r="4.6"/><circle cx="546.72" cy="582.0" r="4.6"/><circle cx="552.26" cy="582.0" r="4.6"/><circle cx="557.81" cy="582.0" r="4.6"/><circle cx="563.35" cy="582.0" r="4.6"/><circle cx="568.89" cy="582.0" r="4.6"/><circle cx="574.44" cy="582.0" r="4.6"/><circle cx="579.98" cy="582.0" r="4.6"/><circle cx="585.52" cy="582.0" r="4.6"/><circle cx="591.07" cy="582.0" r="4.6"/><circle cx="596.61" cy="582.0" r="4.6"/><circle cx="602.15" cy="582.0" r="4.6"/><circle cx="607.70" cy="582.0" r="4.6"/><circle cx="613.24" cy="582.0" r="4.6"/><circle cx="618.78" cy="582.0" r="4.6"/><circle cx="624.33" cy="582.0" r="4.6"/><circle cx="629.87" cy="582.0" r="4.6"/><circle cx="635.42" cy="582.0" r="4.6"/><circle cx="640.96" cy="582.0" r="4.6"/><circle cx="646.50" cy="582.0" r="4.6"/><circle cx="652.05" cy="582.0" r="4.6"/><circle cx="657.59" cy="582.0" r="4.6"/><circle cx="663.13" cy="582.0" r="4.6"/><circle cx="668.68" cy="582.0" r="4.6"/><circle cx="724.11" cy="582.0" r="4.6"/><circle cx="729.65" cy="582.0" r="4.6"/><circle cx="735.20" cy="582.0" r="4.6"/><circle cx="740.74" cy="582.0" r="4.6"/><circle cx="746.29" cy="582.0" r="4.6"/><circle cx="751.83" cy="582.0" r="4.6"/><circle cx="757.37" cy="582.0" r="4.6"/><circle cx="762.92" cy="582.0" r="4.6"/><circle cx="768.46" cy="582.0" r="4.6"/><circle cx="774.00" cy="582.0" r="4.6"/><circle cx="779.55" cy="582.0" r="4.6"/><circle cx="785.09" cy="582.0" r="4.6"/><circle cx="790.63" cy="582.0" r="4.6"/><circle cx="796.18" cy="582.0" r="4.6"/><circle cx="801.72" cy="582.0" r="4.6"/><circle cx="807.26" cy="582.0" r="4.6"/><circle cx="812.81" cy="582.0" r="4.6"/><circle cx="818.35" cy="582.0" r="4.6"/><circle cx="823.89" cy="582.0" r="4.6"/><circle cx="829.44" cy="582.0" r="4.6"/><circle cx="834.98" cy="582.0" r="4.6"/><circle cx="840.52" cy="582.0" r="4.6"/><circle cx="846.07" cy="582.0" r="4.6"/><circle cx="851.61" cy="582.0" r="4.6"/><circle cx="857.16" cy="582.0" r="4.6"/><circle cx="862.70" cy="582.0" r="4.6"/><circle cx="868.24" cy="582.0" r="4.6"/><circle cx="873.79" cy="582.0" r="4.6"/><circle cx="879.33" cy="582.0" r="4.6"/><circle cx="884.87" cy="582.0" r="4.6"/><circle cx="9.00" cy="561.0" r="4.6"/><circle cx="14.54" cy="561.0" r="4.6"/><circle cx="20.09" cy="561.0" r="4.6"/><circle cx="25.63" cy="561.0" r="4.6"/><circle cx="31.17" cy="561.0" r="4.6"/><circle cx="36.72" cy="561.0" r="4.6"/><circle cx="42.26" cy="561.0" r="4.6"/><circle cx="47.80" cy="561.0" r="4.6"/><circle cx="53.35" cy="561.0" r="4.6"/><circle cx="58.89" cy="561.0" r="4.6"/><circle cx="64.44" cy="561.0" r="4.6"/><circle cx="69.98" cy="561.0" r="4.6"/><circle cx="75.52" cy="561.0" r="4.6"/><circle cx="81.07" cy="561.0" r="4.6"/><circle cx="86.61" cy="561.0" r="4.6"/><circle cx="175.31" cy="561.0" r="4.6"/><circle cx="180.85" cy="561.0" r="4.6"/><circle cx="186.39" cy="561.0" r="4.6"/><circle cx="203.02" cy="561.0" r="4.6"/><circle cx="208.57" cy="561.0" r="4.6"/><circle cx="214.11" cy="561.0" r="4.6"/><circle cx="219.65" cy="561.0" r="4.6"/><circle cx="225.20" cy="561.0" r="4.6"/><circle cx="230.74" cy="561.0" r="4.6"/><circle cx="236.28" cy="561.0" r="4.6"/><circle cx="241.83" cy="561.0" r="4.6"/><circle cx="247.37" cy="561.0" r="4.6"/><circle cx="252.91" cy="561.0" r="4.6"/><circle cx="258.46" cy="561.0" r="4.6"/><circle cx="264.00" cy="561.0" r="4.6"/><circle cx="269.54" cy="561.0" r="4.6"/><circle cx="275.09" cy="561.0" r="4.6"/><circle cx="280.63" cy="561.0" r="4.6"/><circle cx="286.18" cy="561.0" r="4.6"/><circle cx="291.72" cy="561.0" r="4.6"/><circle cx="297.26" cy="561.0" r="4.6"/><circle cx="302.81" cy="561.0" r="4.6"/><circle cx="308.35" cy="561.0" r="4.6"/><circle cx="313.89" cy="561.0" r="4.6"/><circle cx="319.44" cy="561.0" r="4.6"/><circle cx="324.98" cy="561.0" r="4.6"/><circle cx="330.52" cy="561.0" r="4.6"/><circle cx="336.07" cy="561.0" r="4.6"/><circle cx="341.61" cy="561.0" r="4.6"/><circle cx="347.15" cy="561.0" r="4.6"/><circle cx="352.70" cy="561.0" r="4.6"/><circle cx="358.24" cy="561.0" r="4.6"/><circle cx="363.78" cy="561.0" r="4.6"/><circle cx="369.33" cy="561.0" r="4.6"/><circle cx="374.87" cy="561.0" r="4.6"/><circle cx="380.41" cy="561.0" r="4.6"/><circle cx="385.96" cy="561.0" r="4.6"/><circle cx="391.50" cy="561.0" r="4.6"/><circle cx="446.94" cy="561.0" r="4.6"/><circle cx="452.48" cy="561.0" r="4.6"/><circle cx="458.02" cy="561.0" r="4.6"/><circle cx="463.57" cy="561.0" r="4.6"/><circle cx="469.11" cy="561.0" r="4.6"/><circle cx="474.65" cy="561.0" r="4.6"/><circle cx="480.20" cy="561.0" r="4.6"/><circle cx="485.74" cy="561.0" r="4.6"/><circle cx="491.28" cy="561.0" r="4.6"/><circle cx="496.83" cy="561.0" r="4.6"/><circle cx="502.37" cy="561.0" r="4.6"/><circle cx="507.91" cy="561.0" r="4.6"/><circle cx="513.46" cy="561.0" r="4.6"/><circle cx="519.00" cy="561.0" r="4.6"/><circle cx="524.55" cy="561.0" r="4.6"/><circle cx="530.09" cy="561.0" r="4.6"/><circle cx="535.63" cy="561.0" r="4.6"/><circle cx="541.18" cy="561.0" r="4.6"/><circle cx="546.72" cy="561.0" r="4.6"/><circle cx="552.26" cy="561.0" r="4.6"/><circle cx="557.81" cy="561.0" r="4.6"/><circle cx="563.35" cy="561.0" r="4.6"/><circle cx="568.89" cy="561.0" r="4.6"/><circle cx="574.44" cy="561.0" r="4.6"/><circle cx="579.98" cy="561.0" r="4.6"/><circle cx="585.52" cy="561.0" r="4.6"/><circle cx="591.07" cy="561.0" r="4.6"/><circle cx="596.61" cy="561.0" r="4.6"/><circle cx="602.15" cy="561.0" r="4.6"/><circle cx="607.70" cy="561.0" r="4.6"/><circle cx="613.24" cy="561.0" r="4.6"/><circle cx="618.78" cy="561.0" r="4.6"/><circle cx="624.33" cy="561.0" r="4.6"/><circle cx="629.87" cy="561.0" r="4.6"/><circle cx="635.42" cy="561.0" r="4.6"/><circle cx="735.20" cy="561.0" r="4.6"/><circle cx="740.74" cy="561.0" r="4.6"/><circle cx="746.29" cy="561.0" r="4.6"/><circle cx="751.83" cy="561.0" r="4.6"/><circle cx="757.37" cy="561.0" r="4.6"/><circle cx="762.92" cy="561.0" r="4.6"/><circle cx="768.46" cy="561.0" r="4.6"/><circle cx="785.09" cy="561.0" r="4.6"/><circle cx="790.63" cy="561.0" r="4.6"/><circle cx="796.18" cy="561.0" r="4.6"/><circle cx="801.72" cy="561.0" r="4.6"/><circle cx="807.26" cy="561.0" r="4.6"/><circle cx="812.81" cy="561.0" r="4.6"/><circle cx="818.35" cy="561.0" r="4.6"/><circle cx="823.89" cy="561.0" r="4.6"/><circle cx="829.44" cy="561.0" r="4.6"/><circle cx="834.98" cy="561.0" r="4.6"/><circle cx="840.52" cy="561.0" r="4.6"/><circle cx="846.07" cy="561.0" r="4.6"/><circle cx="851.61" cy="561.0" r="4.6"/><circle cx="857.16" cy="561.0" r="4.6"/><circle cx="862.70" cy="561.0" r="4.6"/><circle cx="868.24" cy="561.0" r="4.6"/><circle cx="873.79" cy="561.0" r="4.6"/><circle cx="879.33" cy="561.0" r="4.6"/><circle cx="9.00" cy="540.0" r="4.6"/><circle cx="14.54" cy="540.0" r="4.6"/><circle cx="20.09" cy="540.0" r="4.6"/><circle cx="25.63" cy="540.0" r="4.6"/><circle cx="31.17" cy="540.0" r="4.6"/><circle cx="36.72" cy="540.0" r="4.6"/><circle cx="42.26" cy="540.0" r="4.6"/><circle cx="47.80" cy="540.0" r="4.6"/><circle cx="53.35" cy="540.0" r="4.6"/><circle cx="58.89" cy="540.0" r="4.6"/><circle cx="64.44" cy="540.0" r="4.6"/><circle cx="69.98" cy="540.0" r="4.6"/><circle cx="75.52" cy="540.0" r="4.6"/><circle cx="214.11" cy="540.0" r="4.6"/><circle cx="219.65" cy="540.0" r="4.6"/><circle cx="225.20" cy="540.0" r="4.6"/><circle cx="230.74" cy="540.0" r="4.6"/><circle cx="236.28" cy="540.0" r="4.6"/><circle cx="241.83" cy="540.0" r="4.6"/><circle cx="247.37" cy="540.0" r="4.6"/><circle cx="252.91" cy="540.0" r="4.6"/><circle cx="258.46" cy="540.0" r="4.6"/><circle cx="264.00" cy="540.0" r="4.6"/><circle cx="269.54" cy="540.0" r="4.6"/><circle cx="275.09" cy="540.0" r="4.6"/><circle cx="280.63" cy="540.0" r="4.6"/><circle cx="286.18" cy="540.0" r="4.6"/><circle cx="291.72" cy="540.0" r="4.6"/><circle cx="297.26" cy="540.0" r="4.6"/><circle cx="324.98" cy="540.0" r="4.6"/><circle cx="330.52" cy="540.0" r="4.6"/><circle cx="336.07" cy="540.0" r="4.6"/><circle cx="341.61" cy="540.0" r="4.6"/><circle cx="347.15" cy="540.0" r="4.6"/><circle cx="352.70" cy="540.0" r="4.6"/><circle cx="358.24" cy="540.0" r="4.6"/><circle cx="363.78" cy="540.0" r="4.6"/><circle cx="369.33" cy="540.0" r="4.6"/><circle cx="374.87" cy="540.0" r="4.6"/><circle cx="452.48" cy="540.0" r="4.6"/><circle cx="458.02" cy="540.0" r="4.6"/><circle cx="463.57" cy="540.0" r="4.6"/><circle cx="469.11" cy="540.0" r="4.6"/><circle cx="474.65" cy="540.0" r="4.6"/><circle cx="480.20" cy="540.0" r="4.6"/><circle cx="485.74" cy="540.0" r="4.6"/><circle cx="491.28" cy="540.0" r="4.6"/><circle cx="496.83" cy="540.0" r="4.6"/><circle cx="502.37" cy="540.0" r="4.6"/><circle cx="507.91" cy="540.0" r="4.6"/><circle cx="513.46" cy="540.0" r="4.6"/><circle cx="519.00" cy="540.0" r="4.6"/><circle cx="524.55" cy="540.0" r="4.6"/><circle cx="530.09" cy="540.0" r="4.6"/><circle cx="535.63" cy="540.0" r="4.6"/><circle cx="541.18" cy="540.0" r="4.6"/><circle cx="546.72" cy="540.0" r="4.6"/><circle cx="552.26" cy="540.0" r="4.6"/><circle cx="557.81" cy="540.0" r="4.6"/><circle cx="563.35" cy="540.0" r="4.6"/><circle cx="568.89" cy="540.0" r="4.6"/><circle cx="574.44" cy="540.0" r="4.6"/><circle cx="579.98" cy="540.0" r="4.6"/><circle cx="585.52" cy="540.0" r="4.6"/><circle cx="591.07" cy="540.0" r="4.6"/><circle cx="596.61" cy="540.0" r="4.6"/><circle cx="602.15" cy="540.0" r="4.6"/><circle cx="607.70" cy="540.0" r="4.6"/><circle cx="613.24" cy="540.0" r="4.6"/><circle cx="618.78" cy="540.0" r="4.6"/><circle cx="624.33" cy="540.0" r="4.6"/><circle cx="807.26" cy="540.0" r="4.6"/><circle cx="812.81" cy="540.0" r="4.6"/><circle cx="818.35" cy="540.0" r="4.6"/><circle cx="823.89" cy="540.0" r="4.6"/><circle cx="829.44" cy="540.0" r="4.6"/><circle cx="834.98" cy="540.0" r="4.6"/><circle cx="840.52" cy="540.0" r="4.6"/><circle cx="846.07" cy="540.0" r="4.6"/><circle cx="851.61" cy="540.0" r="4.6"/><circle cx="857.16" cy="540.0" r="4.6"/><circle cx="862.70" cy="540.0" r="4.6"/><circle cx="868.24" cy="540.0" r="4.6"/><circle cx="873.79" cy="540.0" r="4.6"/><circle cx="879.33" cy="540.0" r="4.6"/><circle cx="9.00" cy="498.0" r="4.6"/><circle cx="14.54" cy="498.0" r="4.6"/><circle cx="20.09" cy="498.0" r="4.6"/><circle cx="25.63" cy="498.0" r="4.6"/><circle cx="31.17" cy="498.0" r="4.6"/><circle cx="36.72" cy="498.0" r="4.6"/><circle cx="568.89" cy="498.0" r="4.6"/><circle cx="574.44" cy="498.0" r="4.6"/><circle cx="579.98" cy="498.0" r="4.6"/><circle cx="585.52" cy="498.0" r="4.6"/><circle cx="591.07" cy="498.0" r="4.6"/><circle cx="596.61" cy="498.0" r="4.6"/><circle cx="602.15" cy="498.0" r="4.6"/><circle cx="607.70" cy="498.0" r="4.6"/><circle cx="857.16" cy="498.0" r="4.6"/><circle cx="862.70" cy="498.0" r="4.6"/><circle cx="868.24" cy="498.0" r="4.6"/><circle cx="9.00" cy="477.0" r="4.6"/><circle cx="14.54" cy="477.0" r="4.6"/><circle cx="20.09" cy="477.0" r="4.6"/><circle cx="25.63" cy="477.0" r="4.6"/><circle cx="31.17" cy="477.0" r="4.6"/><circle cx="36.72" cy="477.0" r="4.6"/><circle cx="574.44" cy="477.0" r="4.6"/><circle cx="579.98" cy="477.0" r="4.6"/><circle cx="585.52" cy="477.0" r="4.6"/><circle cx="591.07" cy="477.0" r="4.6"/><circle cx="596.61" cy="477.0" r="4.6"/><circle cx="602.15" cy="477.0" r="4.6"/><circle cx="607.70" cy="477.0" r="4.6"/><circle cx="862.70" cy="477.0" r="4.6"/><circle cx="868.24" cy="477.0" r="4.6"/><circle cx="9.00" cy="456.0" r="4.6"/><circle cx="14.54" cy="456.0" r="4.6"/><circle cx="20.09" cy="456.0" r="4.6"/><circle cx="25.63" cy="456.0" r="4.6"/><circle cx="31.17" cy="456.0" r="4.6"/><circle cx="596.61" cy="456.0" r="4.6"/><circle cx="9.00" cy="435.0" r="4.6"/><circle cx="14.54" cy="435.0" r="4.6"/><circle cx="20.09" cy="435.0" r="4.6"/><circle cx="25.63" cy="435.0" r="4.6"/><circle cx="1045.6" cy="603.0" r="4.6"/><circle cx="1050.8" cy="603.0" r="4.6"/></g><g fill="#ff0000" stroke="#4a0000" stroke-width="0.8"><path d="M3.10 523.7L8.00 515.3h2.0L14.90 523.7z"/><path d="M8.64 523.7L13.54 515.3h2.0L20.44 523.7z"/><path d="M14.19 523.7L19.09 515.3h2.0L25.99 523.7z"/><path d="M19.73 523.7L24.63 515.3h2.0L31.53 523.7z"/><path d="M25.27 523.7L30.17 515.3h2.0L37.07 523.7z"/><path d="M30.82 523.7L35.72 515.3h2.0L42.62 523.7z"/><path d="M36.36 523.7L41.26 515.3h2.0L48.16 523.7z"/><path d="M41.90 523.7L46.80 515.3h2.0L53.70 523.7z"/><path d="M47.45 523.7L52.35 515.3h2.0L59.25 523.7z"/><path d="M219.30 523.7L224.20 515.3h2.0L231.10 523.7z"/><path d="M224.84 523.7L229.74 515.3h2.0L236.64 523.7z"/><path d="M230.38 523.7L235.28 515.3h2.0L242.18 523.7z"/><path d="M235.93 523.7L240.83 515.3h2.0L247.73 523.7z"/><path d="M241.47 523.7L246.37 515.3h2.0L253.27 523.7z"/><path d="M247.01 523.7L251.91 515.3h2.0L258.81 523.7z"/><path d="M463.21 523.7L468.11 515.3h2.0L475.01 523.7z"/><path d="M468.75 523.7L473.65 515.3h2.0L480.55 523.7z"/><path d="M474.30 523.7L479.20 515.3h2.0L486.10 523.7z"/><path d="M551.91 523.7L556.81 515.3h2.0L563.71 523.7z"/><path d="M557.45 523.7L562.35 515.3h2.0L569.25 523.7z"/><path d="M562.99 523.7L567.89 515.3h2.0L574.79 523.7z"/><path d="M568.54 523.7L573.44 515.3h2.0L580.34 523.7z"/><path d="M574.08 523.7L578.98 515.3h2.0L585.88 523.7z"/><path d="M579.62 523.7L584.52 515.3h2.0L591.42 523.7z"/><path d="M585.17 523.7L590.07 515.3h2.0L596.97 523.7z"/><path d="M590.71 523.7L595.61 515.3h2.0L602.51 523.7z"/><path d="M596.25 523.7L601.15 515.3h2.0L608.05 523.7z"/><path d="M601.80 523.7L606.70 515.3h2.0L613.60 523.7z"/><path d="M607.34 523.7L612.24 515.3h2.0L619.14 523.7z"/><path d="M612.88 523.7L617.78 515.3h2.0L624.68 523.7z"/><path d="M840.17 523.7L845.07 515.3h2.0L851.97 523.7z"/><path d="M845.71 523.7L850.61 515.3h2.0L857.51 523.7z"/><path d="M851.26 523.7L856.16 515.3h2.0L863.06 523.7z"/><path d="M856.80 523.7L861.70 515.3h2.0L868.60 523.7z"/><path d="M862.34 523.7L867.24 515.3h2.0L874.14 523.7z"/><path d="M867.89 523.7L872.79 515.3h2.0L879.69 523.7z"/></g></svg>
<svg width="1130" height="650" viewBox="0 0 1130 650" style="position:absolute;left:0;top:0">
<rect x="5.5" y="3.5" width="12" height="11" rx="2.5" fill="none" stroke="#8a8a8a" stroke-width="1.2"/>
<rect x="12" y="5.5" width="3" height="7" fill="#8a8a8a"/>
<circle cx="125" cy="29" r="6.2" fill="#7b7b7b"/>
<path d="M122 27.6l3 3l3-3" fill="none" stroke="#161616" stroke-width="1.15"/>
<circle cx="8" cy="406" r="6.2" fill="#7b7b7b"/>
<path d="M5 404.6l3 3l3-3" fill="none" stroke="#161616" stroke-width="1.15"/>
<path d="M1042.5 24.5l5 5l-5 5l-5-5z" fill="none" stroke="#8a8a8a" stroke-width="1"/>
<rect x="1055.5" y="24.5" width="11" height="10" rx="2" fill="none" stroke="#8a8a8a" stroke-width="1.2"/>
<rect x="1062" y="26" width="3" height="7" fill="#8c8c8c"/>
</svg><div class="t " style="left:28px;top:2px;">分时</div><div class="t " style="left:61px;top:2px;">1分钟</div><div class="t " style="left:100px;top:2px;">5分钟</div><div class="t " style="left:139px;top:2px;">15分钟</div><div class="t " style="left:185px;top:2px;">30分钟</div><div class="t " style="left:231px;top:2px;">60分钟</div><div class="t cy" style="left:278px;top:2px;">日线</div><div class="t " style="left:312px;top:2px;">周线</div><div class="t " style="left:345px;top:2px;">月线</div><div class="t " style="left:378px;top:2px;">多周期</div><div class="t " style="left:422px;top:2px;">更多 &gt;</div><div class="t" style="left:806px;top:2px;width:33px;text-align:center">复权</div><div class="t" style="left:840px;top:2px;width:34px;text-align:center">叠加</div><div class="t" style="left:875px;top:2px;width:34px;text-align:center">多股</div><div class="t" style="left:910px;top:2px;width:34px;text-align:center">统计</div><div class="t" style="left:945px;top:2px;width:34px;text-align:center">画线</div><div class="t" style="left:980px;top:2px;width:34px;text-align:center">F10</div><div class="t" style="left:1015px;top:2px;width:34px;text-align:center">标记</div><div class="t" style="left:1050px;top:2px;width:34px;text-align:center">+自选</div><div class="t" style="left:1085px;top:2px;width:36px;text-align:center">返回</div><div class="t " style="left:3px;top:22px;">ST萃华<span class="pa">(</span>日线.前复权<span class="pa">)</span></div><div class="t " style="left:18px;top:399px;">股朋指标网</div><div class="t " style="left:82px;top:399px;">: 5.00</div><div class="t " style="left:117px;top:399px;color:#ffff00">: 2.00</div><div class="t ax" style="left:1072px;top:83px">16.00</div><div class="t ax" style="left:1072px;top:116px">15.00</div><div class="t ax" style="left:1072px;top:146px">14.00</div><div class="t ax" style="left:1072px;top:178px">13.00</div><div class="t ax" style="left:1072px;top:208px">12.00</div><div class="t ax" style="left:1072px;top:241px">11.00</div><div class="t ax" style="left:1072px;top:271px">10.00</div><div class="t ax" style="left:1072px;top:304px">9.00</div><div class="t ax" style="left:1072px;top:334px">8.00</div><div class="pbox"><span>11.05</span></div><div class="t ax" style="left:1072px;top:410px">10.00</div><div class="t ax" style="left:1072px;top:452px">8.00</div><div class="t ax" style="left:1072px;top:494px">6.00</div><div class="t ax" style="left:1072px;top:535px">4.00</div><div class="t ax" style="left:1072px;top:577px">2.00</div><div class="t rd" style="left:2px;top:632px;">2025年</div><div class="t rd" style="left:63px;top:632px;">7</div><div class="t rd" style="left:191px;top:632px;">8</div><div class="t rd" style="left:429px;top:632px;">10</div><div class="t rd" style="left:523px;top:632px;">11</div><div class="t rd" style="left:634px;top:632px;">12</div><div class="t rd" style="left:762px;top:632px;">1</div><div class="t rd" style="left:873px;top:632px;">2</div><div class="t rd" style="left:945px;top:632px;">3</div><div class="dbox">2025/08/14/四</div><div class="strip"><div class="s" style="top:26px">委比</div><div class="s" style="top:47px">卖五</div><div class="s" style="top:66.4px">卖四</div><div class="s" style="top:85.8px">卖三</div><div class="s" style="top:105.2px">卖二</div><div class="s" style="top:124.6px">卖一</div><div class="s" style="top:144px">买一</div><div class="s" style="top:163.4px">买二</div><div class="s" style="top:182.8px">买三</div><div class="s" style="top:202.2px">买四</div><div class="s" style="top:221.6px">买五</div><div class="s" style="top:241px">现价</div><div class="s" style="top:260px">涨跌</div><div class="s" style="top:279px">涨幅</div><div class="s" style="top:298px">总量</div><div class="s" style="top:317px">外盘</div><div class="s" style="top:338px">换手</div><div class="s" style="top:357px">净资</div><div class="s" style="top:376px">收益</div><div class="s" style="top:398px;left:2px;color:#e6e600">自选</div><div class="s" style="top:419px">交易</div><div class="s" style="top:438px;font-size:14px;left:1px;font-weight:bold">14:50</div><div class="s" style="top:456px;font-size:14px;left:1px;font-weight:bold">14:51</div><div class="s" style="top:474px;font-size:14px;left:1px;font-weight:bold">14:52</div><div class="s" style="top:492px;font-size:14px;left:1px;font-weight:bold">14:53</div><div class="s" style="top:510px;font-size:14px;left:1px;font-weight:bold">14:54</div><div class="s" style="top:528px;font-size:14px;left:1px;font-weight:bold">14:55</div><div class="s" style="top:546px;font-size:14px;left:1px;font-weight:bold">14:56</div><div class="s" style="top:564px;font-size:14px;left:1px;font-weight:bold">14:57</div><div class="s" style="top:582px;font-size:14px;left:1px;font-weight:bold">14:58</div></div><div class="wm"><div class="w1">乐淘公式网</div><div class="w2">www.60lt.com</div></div><div class="bt" style="left:6px;color:#fff"><span>川 川</span></div><div class="bt" style="left:45px;color:#fff"><span>小</span></div><div class="bt" style="left:823px;color:#fff"><span>小</span></div><div class="bt" style="left:843px;color:#00e0e0"><span>股朋</span></div></body></html>
